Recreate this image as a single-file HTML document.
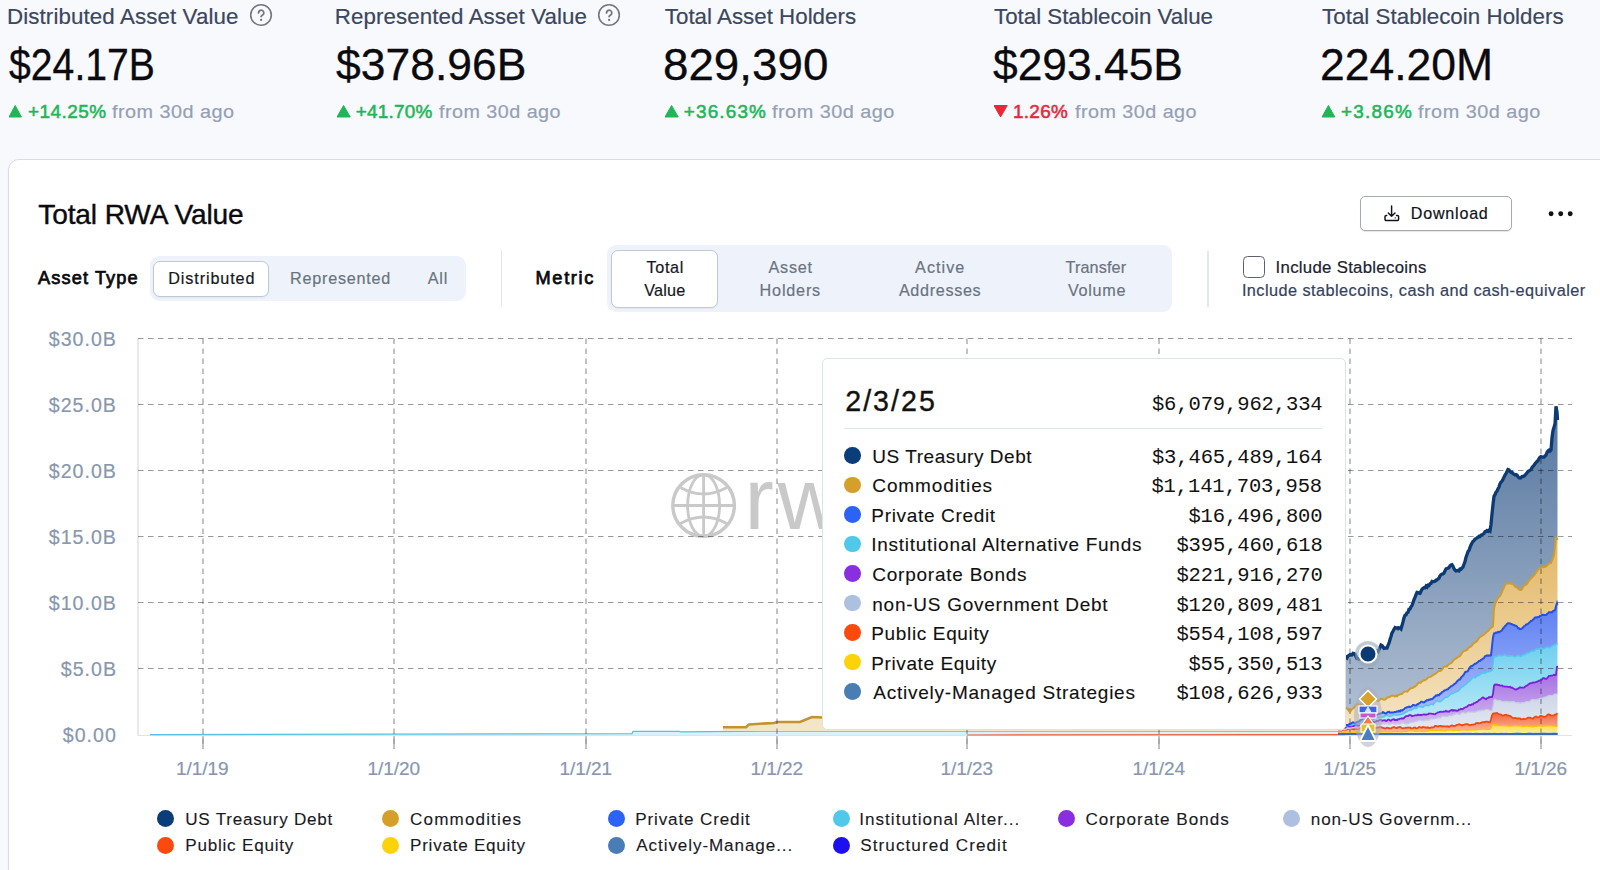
<!DOCTYPE html>
<html><head><meta charset="utf-8">
<style>
*{margin:0;padding:0;box-sizing:border-box}
html,body{width:1600px;height:870px;overflow:hidden;background:#f8f9fd;font-family:"Liberation Sans",sans-serif}
.bx,.abs{position:absolute}
.tx{position:absolute;white-space:nowrap;line-height:1}
</style></head><body>
<div class="bx" style="left:8px;top:158.5px;width:1692.00px;height:841.50px;background:#fff;border:1.5px solid #d8dce4;border-radius:11px;box-shadow:0 1px 2px rgba(20,30,50,.05)"></div><svg class="bx" style="left:249px;top:3.3px" width="24" height="24" viewBox="0 0 24 24"><circle cx="12" cy="12" r="10.3" fill="none" stroke="#74777f" stroke-width="1.6"/><path d="M9.5 9.9a2.65 2.65 0 1 1 4.1 2.2c-.9.55-1.5.85-1.5 1.5" fill="none" stroke="#74777f" stroke-width="1.8" stroke-linecap="round"/><circle cx="12.1" cy="16.9" r="1.15" fill="#74777f"/></svg><svg class="bx" style="left:596.6px;top:3.3px" width="24" height="24" viewBox="0 0 24 24"><circle cx="12" cy="12" r="10.3" fill="none" stroke="#74777f" stroke-width="1.6"/><path d="M9.5 9.9a2.65 2.65 0 1 1 4.1 2.2c-.9.55-1.5.85-1.5 1.5" fill="none" stroke="#74777f" stroke-width="1.8" stroke-linecap="round"/><circle cx="12.1" cy="16.9" r="1.15" fill="#74777f"/></svg><svg class="bx" style="left:9px;top:105px" width="13.4" height="13"><path d="M6.20,0.5 L12.40,12 L0,12 Z" fill="#1eb757" stroke="#1eb757" stroke-width="1" stroke-linejoin="round"/></svg><svg class="bx" style="left:336.8px;top:105px" width="14.2" height="13"><path d="M6.60,0.5 L13.20,12 L0,12 Z" fill="#1eb757" stroke="#1eb757" stroke-width="1" stroke-linejoin="round"/></svg><svg class="bx" style="left:664.8px;top:105px" width="14.2" height="13"><path d="M6.60,0.5 L13.20,12 L0,12 Z" fill="#1eb757" stroke="#1eb757" stroke-width="1" stroke-linejoin="round"/></svg><svg class="bx" style="left:994px;top:105px" width="14.2" height="13"><path d="M0,0.5 L13.20,0.5 L6.60,12 Z" fill="#e8283a" stroke="#e8283a" stroke-width="1" stroke-linejoin="round"/></svg><svg class="bx" style="left:1322px;top:105px" width="13.8" height="13"><path d="M6.40,0.5 L12.80,12 L0,12 Z" fill="#1eb757" stroke="#1eb757" stroke-width="1" stroke-linejoin="round"/></svg><div class="bx" style="left:1359.75px;top:196.3px;width:152.55px;height:34.95px;background:#fff;border:1.3px solid #a4a8b0;border-radius:5px;box-shadow:0 1px 1px rgba(0,0,0,.10)"></div><svg class="bx" style="left:1383px;top:205px" width="17" height="17" viewBox="0 0 17 17"><path d="M8.6 0.9v10.3M5.3 7.9l3.3 3.4 3.4-3.4" fill="none" stroke="#111318" stroke-width="1.45" stroke-linecap="round" stroke-linejoin="round"/><path d="M3.7 10.4H3.2a1.2 1.2 0 0 0-1.2 1.2v2.7a1.2 1.2 0 0 0 1.2 1.2h11.2a1.2 1.2 0 0 0 1.2-1.2v-2.7a1.2 1.2 0 0 0-1.2-1.2h-.9" fill="none" stroke="#111318" stroke-width="1.45" stroke-linecap="round"/><circle cx="12.2" cy="12.9" r="0.6" fill="#111318"/></svg><svg class="bx" style="left:1546px;top:209px" width="30" height="10"><circle cx="5.1" cy="4.7" r="2.45" fill="#111"/><circle cx="14.75" cy="4.7" r="2.45" fill="#111"/><circle cx="24.2" cy="4.7" r="2.45" fill="#111"/></svg><div class="bx" style="left:149.5px;top:256.25px;width:316.60px;height:44.25px;background:#eef3fb;border-radius:9px"></div><div class="bx" style="left:153.1px;top:260.6px;width:115.65px;height:36.00px;background:#fff;border:1.3px solid #c2c7d1;border-radius:7px;box-shadow:0 1px 2px rgba(30,40,60,.06)"></div><div class="bx" style="left:500.6px;top:249.7px;width:1.30px;height:57.00px;background:#e3e6ec"></div><div class="bx" style="left:607px;top:245.25px;width:565.40px;height:66.50px;background:#eef3fb;border-radius:9px"></div><div class="bx" style="left:611px;top:249.8px;width:107.00px;height:57.80px;background:#fff;border:1.3px solid #c2c7d1;border-radius:7px;box-shadow:0 1px 2px rgba(30,40,60,.06)"></div><div class="bx" style="left:1207.3px;top:250.5px;width:1.30px;height:56.00px;background:#e3e6ec"></div><div class="bx" style="left:1242.75px;top:256.1px;width:21.85px;height:22.05px;background:#fff;border:1.5px solid #5d6169;border-radius:4.5px"></div><div class="bx" style="left:156.80px;top:809.90px;width:17px;height:17px;border-radius:50%;background:#0b3d7a"></div><div class="bx" style="left:382.00px;top:809.90px;width:17px;height:17px;border-radius:50%;background:#d4a02a"></div><div class="bx" style="left:607.60px;top:809.90px;width:17px;height:17px;border-radius:50%;background:#2c62f5"></div><div class="bx" style="left:832.50px;top:809.90px;width:17px;height:17px;border-radius:50%;background:#4fc8ea"></div><div class="bx" style="left:1057.80px;top:809.90px;width:17px;height:17px;border-radius:50%;background:#8a2fe0"></div><div class="bx" style="left:1283.10px;top:809.90px;width:17px;height:17px;border-radius:50%;background:#adc0df"></div><div class="bx" style="left:156.80px;top:836.80px;width:17px;height:17px;border-radius:50%;background:#fc4a0e"></div><div class="bx" style="left:382.00px;top:836.80px;width:17px;height:17px;border-radius:50%;background:#fcd20a"></div><div class="bx" style="left:607.60px;top:836.80px;width:17px;height:17px;border-radius:50%;background:#4a7db5"></div><div class="bx" style="left:832.50px;top:836.80px;width:17px;height:17px;border-radius:50%;background:#1c0ff0"></div>
<svg class="abs" style="left:0;top:0" width="1600" height="870"><defs><linearGradient id="gN" gradientUnits="userSpaceOnUse" x1="0" y1="405" x2="0" y2="735"><stop offset="0" stop-color="#54759e"/><stop offset="1" stop-color="#b6c4d6"/></linearGradient><linearGradient id="gG" gradientUnits="userSpaceOnUse" x1="0" y1="535" x2="0" y2="735"><stop offset="0" stop-color="#e2b664"/><stop offset="1" stop-color="#f6e6c6"/></linearGradient><linearGradient id="gB" gradientUnits="userSpaceOnUse" x1="0" y1="602" x2="0" y2="735"><stop offset="0" stop-color="#5a7ef2"/><stop offset="1" stop-color="#b9c7fb"/></linearGradient><linearGradient id="gC" gradientUnits="userSpaceOnUse" x1="0" y1="645" x2="0" y2="735"><stop offset="0" stop-color="#6fd0ef"/><stop offset="1" stop-color="#c9eef9"/></linearGradient><linearGradient id="gP" gradientUnits="userSpaceOnUse" x1="0" y1="666" x2="0" y2="735"><stop offset="0" stop-color="#9e66e0"/><stop offset="1" stop-color="#dcc6f3"/></linearGradient><linearGradient id="gL" gradientUnits="userSpaceOnUse" x1="0" y1="694" x2="0" y2="735"><stop offset="0" stop-color="#cdd5e7"/><stop offset="1" stop-color="#e8ecf4"/></linearGradient><linearGradient id="gR" gradientUnits="userSpaceOnUse" x1="0" y1="714" x2="0" y2="735"><stop offset="0" stop-color="#f46a44"/><stop offset="1" stop-color="#fcc6ae"/></linearGradient><linearGradient id="gY" gradientUnits="userSpaceOnUse" x1="0" y1="722" x2="0" y2="735"><stop offset="0" stop-color="#fdd632"/><stop offset="1" stop-color="#fef2a8"/></linearGradient></defs><line x1="138" y1="338" x2="138" y2="735.5" stroke="#dfe3ea" stroke-width="1.5"/><line x1="138" y1="735.5" x2="1572" y2="735.5" stroke="#dfe3ea" stroke-width="1.2"/><g fill="none" stroke="#c9c9c9" stroke-width="2.8"><circle cx="703.6" cy="505.5" r="30.8" stroke-width="3.4"/><ellipse cx="703.6" cy="505.5" rx="16" ry="30.8"/><line x1="703.6" y1="475" x2="703.6" y2="536"/><line x1="673" y1="505.5" x2="734" y2="505.5"/><path d="M680.5 487.5 Q703.6 500.5 726.7 487.5"/><path d="M680.5 523.5 Q703.6 510.5 726.7 523.5"/></g><text x="744.6" y="528.7" font-family="Liberation Sans" font-size="88" letter-spacing="3.5" fill="#c9c9c9">rwa</text><path d="M150,734.6 L632,733.6 L633,731.4 L679,731.4 L681,731.8 L776,731 L900,731 L1000,731.2 L1200,731 L1345,731 L1345,735 L150,735 Z" fill="#d8f1fa"/><path d="M150,734.6 L632,733.6 L633,731.4 L679,731.4 L681,731.8 L776,731 L900,731 L1000,731.2 L1200,731 L1345,731" fill="none" stroke="#52c2e6" stroke-width="1.3"/><path d="M967,735 L1345,734.6" fill="none" stroke="#f0603a" stroke-width="1.2"/><path d="M723,727.3 L746,727.3 L749,724.4 L774,723 L777,722 L800,722 L812,717 L822,717.5 L1000,714 L1200,712 L1345,709 L1345,731 L723,731 Z" fill="#f3e6c8"/><path d="M723,727.3 L746,727.3 L749,724.4 L774,723 L777,722 L800,722 L812,717 L822,717.5 L1000,714 L1200,712 L1345,709" fill="none" stroke="#c49330" stroke-width="2.6"/><path d="M1338.0,656.2 L1339.0,657.0 L1340.0,657.8 L1341.0,657.8 L1342.0,656.1 L1343.0,654.8 L1344.0,654.9 L1345.0,656.2 L1346.0,657.2 L1347.0,658.0 L1348.0,656.0 L1349.0,655.3 L1350.0,654.6 L1351.0,655.1 L1352.0,654.9 L1353.0,653.3 L1354.0,653.5 L1355.0,654.1 L1356.0,656.6 L1357.0,658.5 L1358.0,658.7 L1359.0,659.1 L1360.0,658.7 L1361.0,657.8 L1362.0,656.8 L1363.0,655.4 L1364.0,654.9 L1365.0,654.6 L1366.0,653.9 L1367.0,653.5 L1368.0,652.4 L1369.0,652.8 L1370.0,652.0 L1371.0,652.5 L1372.0,651.3 L1373.0,650.9 L1374.0,650.8 L1375.0,650.4 L1376.0,651.5 L1377.0,651.0 L1378.0,651.7 L1379.0,649.6 L1380.0,647.6 L1381.0,645.0 L1382.0,645.5 L1383.0,646.8 L1384.0,648.4 L1385.0,648.2 L1386.0,648.0 L1387.0,648.0 L1388.0,645.4 L1389.0,643.3 L1390.0,639.5 L1391.0,636.5 L1392.0,632.9 L1393.0,631.3 L1394.0,629.2 L1395.0,627.6 L1396.0,628.1 L1397.0,627.9 L1398.0,628.6 L1399.0,627.7 L1400.0,627.9 L1401.0,628.9 L1402.0,625.6 L1403.0,621.9 L1404.0,617.8 L1405.0,615.3 L1406.0,615.0 L1407.0,612.8 L1408.0,612.3 L1409.0,609.2 L1410.0,609.0 L1411.0,606.8 L1412.0,605.5 L1413.0,602.7 L1414.0,599.7 L1415.0,597.5 L1416.0,594.6 L1417.0,592.4 L1418.0,592.6 L1419.0,593.2 L1420.0,593.4 L1421.0,591.2 L1422.0,589.2 L1423.0,588.4 L1424.0,587.7 L1425.0,587.8 L1426.0,586.1 L1427.0,587.1 L1428.0,585.2 L1429.0,585.5 L1430.0,583.8 L1431.0,583.4 L1432.0,581.4 L1433.0,581.6 L1434.0,581.6 L1435.0,581.3 L1436.0,580.0 L1437.0,579.9 L1438.0,578.9 L1439.0,578.1 L1440.0,575.8 L1441.0,574.7 L1442.0,574.1 L1443.0,574.0 L1444.0,573.1 L1445.0,570.9 L1446.0,568.8 L1447.0,568.5 L1448.0,568.2 L1449.0,567.5 L1450.0,565.8 L1451.0,565.0 L1452.0,564.7 L1453.0,566.2 L1454.0,568.6 L1455.0,570.2 L1456.0,571.0 L1457.0,570.7 L1458.0,570.4 L1459.0,570.9 L1460.0,569.1 L1461.0,569.2 L1462.0,567.9 L1463.0,567.0 L1464.0,564.2 L1465.0,561.6 L1466.0,557.3 L1467.0,554.5 L1468.0,551.6 L1469.0,550.4 L1470.0,547.4 L1471.0,545.0 L1472.0,543.0 L1473.0,541.3 L1474.0,540.6 L1475.0,539.1 L1476.0,538.7 L1477.0,537.8 L1478.0,537.3 L1479.0,536.3 L1480.0,536.5 L1481.0,535.1 L1482.0,534.8 L1483.0,534.2 L1484.0,533.5 L1485.0,531.6 L1486.0,531.4 L1487.0,530.6 L1488.0,531.3 L1489.0,530.2 L1490.0,531.0 L1491.0,524.5 L1492.0,514.0 L1493.0,504.5 L1494.0,496.4 L1495.0,494.7 L1496.0,492.1 L1497.0,491.1 L1498.0,488.7 L1499.0,487.1 L1500.0,483.8 L1501.0,482.0 L1502.0,481.2 L1503.0,479.2 L1504.0,477.1 L1505.0,475.1 L1506.0,473.5 L1507.0,471.6 L1508.0,469.6 L1509.0,469.9 L1510.0,471.5 L1511.0,472.3 L1512.0,472.2 L1513.0,473.5 L1514.0,474.3 L1515.0,475.0 L1516.0,474.6 L1517.0,475.0 L1518.0,476.7 L1519.0,477.8 L1520.0,478.0 L1521.0,477.8 L1522.0,476.6 L1523.0,476.4 L1524.0,476.2 L1525.0,475.1 L1526.0,474.0 L1527.0,472.7 L1528.0,471.6 L1529.0,471.0 L1530.0,470.2 L1531.0,469.5 L1532.0,467.7 L1533.0,466.4 L1534.0,465.3 L1535.0,463.8 L1536.0,462.5 L1537.0,461.5 L1538.0,460.6 L1539.0,458.7 L1540.0,457.2 L1541.0,456.6 L1542.0,457.1 L1543.0,457.1 L1544.0,457.1 L1545.0,455.9 L1546.0,455.0 L1547.0,452.5 L1548.0,451.0 L1549.0,450.2 L1550.0,451.2 L1551.0,450.1 L1552.0,437.8 L1553.0,430.6 L1554.0,427.3 L1555.0,424.0 L1556.0,406.3 L1557.0,412.3 L1557.5,420.0 L1557.5,540.0 L1557.0,538.7 L1556.0,537.8 L1555.0,546.7 L1554.0,555.0 L1553.0,558.2 L1552.0,560.5 L1551.0,563.1 L1550.0,563.2 L1549.0,563.6 L1548.0,564.6 L1547.0,565.5 L1546.0,566.4 L1545.0,566.8 L1544.0,567.1 L1543.0,567.3 L1542.0,567.1 L1541.0,567.4 L1540.0,568.2 L1539.0,568.8 L1538.0,569.6 L1537.0,571.1 L1536.0,572.6 L1535.0,574.3 L1534.0,575.6 L1533.0,576.4 L1532.0,577.6 L1531.0,578.1 L1530.0,579.5 L1529.0,580.4 L1528.0,582.2 L1527.0,583.9 L1526.0,584.7 L1525.0,585.0 L1524.0,585.7 L1523.0,587.3 L1522.0,589.1 L1521.0,589.9 L1520.0,589.9 L1519.0,589.3 L1518.0,588.5 L1517.0,587.4 L1516.0,587.1 L1515.0,586.4 L1514.0,585.4 L1513.0,584.2 L1512.0,583.9 L1511.0,583.7 L1510.0,582.8 L1509.0,583.5 L1508.0,583.4 L1507.0,583.5 L1506.0,583.3 L1505.0,585.2 L1504.0,587.4 L1503.0,589.6 L1502.0,591.8 L1501.0,594.2 L1500.0,596.1 L1499.0,596.8 L1498.0,598.1 L1497.0,599.8 L1496.0,601.8 L1495.0,604.1 L1494.0,609.5 L1493.0,626.3 L1492.0,627.3 L1491.0,627.8 L1490.0,628.6 L1489.0,629.8 L1488.0,631.1 L1487.0,631.7 L1486.0,632.8 L1485.0,633.7 L1484.0,634.5 L1483.0,635.2 L1482.0,635.8 L1481.0,636.5 L1480.0,636.9 L1479.0,638.2 L1478.0,639.7 L1477.0,641.1 L1476.0,642.0 L1475.0,642.4 L1474.0,643.1 L1473.0,644.0 L1472.0,645.5 L1471.0,646.6 L1470.0,646.7 L1469.0,647.6 L1468.0,648.5 L1467.0,650.0 L1466.0,650.4 L1465.0,650.7 L1464.0,651.0 L1463.0,651.6 L1462.0,653.0 L1461.0,654.7 L1460.0,655.9 L1459.0,656.6 L1458.0,656.8 L1457.0,657.9 L1456.0,658.4 L1455.0,659.2 L1454.0,659.7 L1453.0,660.9 L1452.0,662.4 L1451.0,663.2 L1450.0,663.5 L1449.0,664.1 L1448.0,665.0 L1447.0,666.4 L1446.0,666.3 L1445.0,666.5 L1444.0,666.8 L1443.0,668.3 L1442.0,669.7 L1441.0,670.6 L1440.0,670.9 L1439.0,671.0 L1438.0,671.6 L1437.0,672.5 L1436.0,673.2 L1435.0,674.1 L1434.0,674.2 L1433.0,675.3 L1432.0,675.6 L1431.0,676.6 L1430.0,676.9 L1429.0,677.1 L1428.0,677.6 L1427.0,678.7 L1426.0,679.4 L1425.0,680.2 L1424.0,680.2 L1423.0,680.7 L1422.0,681.4 L1421.0,682.4 L1420.0,682.9 L1419.0,682.6 L1418.0,683.3 L1417.0,684.9 L1416.0,685.8 L1415.0,686.6 L1414.0,686.7 L1413.0,687.8 L1412.0,688.0 L1411.0,688.2 L1410.0,688.9 L1409.0,689.7 L1408.0,691.0 L1407.0,691.7 L1406.0,691.4 L1405.0,691.4 L1404.0,692.0 L1403.0,692.8 L1402.0,694.0 L1401.0,693.8 L1400.0,694.3 L1399.0,694.7 L1398.0,695.0 L1397.0,696.2 L1396.0,695.6 L1395.0,696.5 L1394.0,695.7 L1393.0,695.8 L1392.0,695.5 L1391.0,695.9 L1390.0,696.8 L1389.0,697.0 L1388.0,697.5 L1387.0,697.5 L1386.0,698.7 L1385.0,699.5 L1384.0,699.8 L1383.0,699.4 L1382.0,698.7 L1381.0,698.8 L1380.0,699.6 L1379.0,700.4 L1378.0,701.0 L1377.0,700.4 L1376.0,700.1 L1375.0,700.0 L1374.0,700.2 L1373.0,701.4 L1372.0,701.7 L1371.0,702.3 L1370.0,701.9 L1369.0,701.9 L1368.0,702.0 L1367.0,702.2 L1366.0,702.6 L1365.0,703.3 L1364.0,704.1 L1363.0,704.2 L1362.0,704.3 L1361.0,704.6 L1360.0,705.3 L1359.0,704.8 L1358.0,704.3 L1357.0,703.8 L1356.0,704.8 L1355.0,706.1 L1354.0,707.7 L1353.0,708.2 L1352.0,709.4 L1351.0,710.4 L1350.0,711.9 L1349.0,711.0 L1348.0,709.4 L1347.0,708.1 L1346.0,708.6 L1345.0,708.9 L1344.0,709.1 L1343.0,708.9 L1342.0,709.2 L1341.0,708.8 L1340.0,708.3 L1339.0,707.8 L1338.0,708.0 Z" fill="url(#gN)"/><path d="M1338.0,708.0 L1339.0,707.8 L1340.0,708.3 L1341.0,708.8 L1342.0,709.2 L1343.0,708.9 L1344.0,709.1 L1345.0,708.9 L1346.0,708.6 L1347.0,708.1 L1348.0,709.4 L1349.0,711.0 L1350.0,711.9 L1351.0,710.4 L1352.0,709.4 L1353.0,708.2 L1354.0,707.7 L1355.0,706.1 L1356.0,704.8 L1357.0,703.8 L1358.0,704.3 L1359.0,704.8 L1360.0,705.3 L1361.0,704.6 L1362.0,704.3 L1363.0,704.2 L1364.0,704.1 L1365.0,703.3 L1366.0,702.6 L1367.0,702.2 L1368.0,702.0 L1369.0,701.9 L1370.0,701.9 L1371.0,702.3 L1372.0,701.7 L1373.0,701.4 L1374.0,700.2 L1375.0,700.0 L1376.0,700.1 L1377.0,700.4 L1378.0,701.0 L1379.0,700.4 L1380.0,699.6 L1381.0,698.8 L1382.0,698.7 L1383.0,699.4 L1384.0,699.8 L1385.0,699.5 L1386.0,698.7 L1387.0,697.5 L1388.0,697.5 L1389.0,697.0 L1390.0,696.8 L1391.0,695.9 L1392.0,695.5 L1393.0,695.8 L1394.0,695.7 L1395.0,696.5 L1396.0,695.6 L1397.0,696.2 L1398.0,695.0 L1399.0,694.7 L1400.0,694.3 L1401.0,693.8 L1402.0,694.0 L1403.0,692.8 L1404.0,692.0 L1405.0,691.4 L1406.0,691.4 L1407.0,691.7 L1408.0,691.0 L1409.0,689.7 L1410.0,688.9 L1411.0,688.2 L1412.0,688.0 L1413.0,687.8 L1414.0,686.7 L1415.0,686.6 L1416.0,685.8 L1417.0,684.9 L1418.0,683.3 L1419.0,682.6 L1420.0,682.9 L1421.0,682.4 L1422.0,681.4 L1423.0,680.7 L1424.0,680.2 L1425.0,680.2 L1426.0,679.4 L1427.0,678.7 L1428.0,677.6 L1429.0,677.1 L1430.0,676.9 L1431.0,676.6 L1432.0,675.6 L1433.0,675.3 L1434.0,674.2 L1435.0,674.1 L1436.0,673.2 L1437.0,672.5 L1438.0,671.6 L1439.0,671.0 L1440.0,670.9 L1441.0,670.6 L1442.0,669.7 L1443.0,668.3 L1444.0,666.8 L1445.0,666.5 L1446.0,666.3 L1447.0,666.4 L1448.0,665.0 L1449.0,664.1 L1450.0,663.5 L1451.0,663.2 L1452.0,662.4 L1453.0,660.9 L1454.0,659.7 L1455.0,659.2 L1456.0,658.4 L1457.0,657.9 L1458.0,656.8 L1459.0,656.6 L1460.0,655.9 L1461.0,654.7 L1462.0,653.0 L1463.0,651.6 L1464.0,651.0 L1465.0,650.7 L1466.0,650.4 L1467.0,650.0 L1468.0,648.5 L1469.0,647.6 L1470.0,646.7 L1471.0,646.6 L1472.0,645.5 L1473.0,644.0 L1474.0,643.1 L1475.0,642.4 L1476.0,642.0 L1477.0,641.1 L1478.0,639.7 L1479.0,638.2 L1480.0,636.9 L1481.0,636.5 L1482.0,635.8 L1483.0,635.2 L1484.0,634.5 L1485.0,633.7 L1486.0,632.8 L1487.0,631.7 L1488.0,631.1 L1489.0,629.8 L1490.0,628.6 L1491.0,627.8 L1492.0,627.3 L1493.0,626.3 L1494.0,609.5 L1495.0,604.1 L1496.0,601.8 L1497.0,599.8 L1498.0,598.1 L1499.0,596.8 L1500.0,596.1 L1501.0,594.2 L1502.0,591.8 L1503.0,589.6 L1504.0,587.4 L1505.0,585.2 L1506.0,583.3 L1507.0,583.5 L1508.0,583.4 L1509.0,583.5 L1510.0,582.8 L1511.0,583.7 L1512.0,583.9 L1513.0,584.2 L1514.0,585.4 L1515.0,586.4 L1516.0,587.1 L1517.0,587.4 L1518.0,588.5 L1519.0,589.3 L1520.0,589.9 L1521.0,589.9 L1522.0,589.1 L1523.0,587.3 L1524.0,585.7 L1525.0,585.0 L1526.0,584.7 L1527.0,583.9 L1528.0,582.2 L1529.0,580.4 L1530.0,579.5 L1531.0,578.1 L1532.0,577.6 L1533.0,576.4 L1534.0,575.6 L1535.0,574.3 L1536.0,572.6 L1537.0,571.1 L1538.0,569.6 L1539.0,568.8 L1540.0,568.2 L1541.0,567.4 L1542.0,567.1 L1543.0,567.3 L1544.0,567.1 L1545.0,566.8 L1546.0,566.4 L1547.0,565.5 L1548.0,564.6 L1549.0,563.6 L1550.0,563.2 L1551.0,563.1 L1552.0,560.5 L1553.0,558.2 L1554.0,555.0 L1555.0,546.7 L1556.0,537.8 L1557.0,538.7 L1557.5,540.0 L1557.5,604.9 L1557.0,603.2 L1556.0,606.4 L1555.0,610.2 L1554.0,610.6 L1553.0,611.1 L1552.0,612.4 L1551.0,612.3 L1550.0,612.2 L1549.0,612.2 L1548.0,613.2 L1547.0,614.0 L1546.0,615.1 L1545.0,615.1 L1544.0,614.9 L1543.0,614.7 L1542.0,614.9 L1541.0,615.9 L1540.0,616.0 L1539.0,616.9 L1538.0,616.9 L1537.0,617.4 L1536.0,617.2 L1535.0,617.5 L1534.0,618.7 L1533.0,619.6 L1532.0,620.7 L1531.0,620.9 L1530.0,622.1 L1529.0,622.7 L1528.0,623.8 L1527.0,624.3 L1526.0,624.7 L1525.0,625.8 L1524.0,626.3 L1523.0,627.6 L1522.0,628.5 L1521.0,629.0 L1520.0,629.2 L1519.0,628.3 L1518.0,628.2 L1517.0,626.5 L1516.0,625.9 L1515.0,625.5 L1514.0,625.0 L1513.0,624.9 L1512.0,624.2 L1511.0,624.0 L1510.0,623.4 L1509.0,623.2 L1508.0,623.3 L1507.0,624.0 L1506.0,625.4 L1505.0,625.9 L1504.0,627.6 L1503.0,628.5 L1502.0,630.3 L1501.0,631.0 L1500.0,631.7 L1499.0,632.1 L1498.0,631.9 L1497.0,632.7 L1496.0,632.6 L1495.0,633.2 L1494.0,633.3 L1493.0,637.4 L1492.0,646.6 L1491.0,655.3 L1490.0,655.7 L1489.0,655.4 L1488.0,655.8 L1487.0,655.3 L1486.0,655.8 L1485.0,656.3 L1484.0,658.0 L1483.0,658.6 L1482.0,659.4 L1481.0,659.8 L1480.0,660.9 L1479.0,660.9 L1478.0,662.0 L1477.0,662.8 L1476.0,663.6 L1475.0,663.8 L1474.0,664.5 L1473.0,665.4 L1472.0,666.0 L1471.0,666.2 L1470.0,667.2 L1469.0,668.8 L1468.0,670.9 L1467.0,671.6 L1466.0,671.8 L1465.0,672.3 L1464.0,674.4 L1463.0,675.5 L1462.0,676.6 L1461.0,677.7 L1460.0,679.5 L1459.0,679.5 L1458.0,680.4 L1457.0,681.5 L1456.0,682.9 L1455.0,683.6 L1454.0,684.2 L1453.0,685.2 L1452.0,685.9 L1451.0,686.4 L1450.0,687.2 L1449.0,687.9 L1448.0,689.2 L1447.0,689.5 L1446.0,689.9 L1445.0,690.1 L1444.0,690.9 L1443.0,691.7 L1442.0,692.1 L1441.0,693.4 L1440.0,693.9 L1439.0,695.2 L1438.0,694.8 L1437.0,695.6 L1436.0,695.4 L1435.0,696.4 L1434.0,697.3 L1433.0,698.5 L1432.0,699.3 L1431.0,699.1 L1430.0,699.7 L1429.0,699.5 L1428.0,700.2 L1427.0,700.0 L1426.0,700.9 L1425.0,701.6 L1424.0,702.4 L1423.0,702.2 L1422.0,701.8 L1421.0,701.7 L1420.0,703.0 L1419.0,703.4 L1418.0,704.0 L1417.0,704.5 L1416.0,705.6 L1415.0,705.6 L1414.0,705.1 L1413.0,705.0 L1412.0,706.0 L1411.0,706.6 L1410.0,707.1 L1409.0,706.6 L1408.0,707.0 L1407.0,707.2 L1406.0,707.7 L1405.0,708.0 L1404.0,709.3 L1403.0,709.8 L1402.0,710.7 L1401.0,710.3 L1400.0,711.4 L1399.0,710.8 L1398.0,711.7 L1397.0,711.4 L1396.0,711.9 L1395.0,711.9 L1394.0,712.3 L1393.0,712.4 L1392.0,712.4 L1391.0,712.4 L1390.0,712.6 L1389.0,711.9 L1388.0,712.0 L1387.0,712.6 L1386.0,713.6 L1385.0,713.2 L1384.0,712.8 L1383.0,712.0 L1382.0,713.1 L1381.0,713.2 L1380.0,713.8 L1379.0,713.8 L1378.0,714.4 L1377.0,714.5 L1376.0,715.0 L1375.0,715.4 L1374.0,716.0 L1373.0,716.0 L1372.0,716.0 L1371.0,716.4 L1370.0,716.2 L1369.0,716.8 L1368.0,717.5 L1367.0,718.6 L1366.0,718.6 L1365.0,718.2 L1364.0,718.3 L1363.0,718.5 L1362.0,719.3 L1361.0,719.7 L1360.0,720.5 L1359.0,721.4 L1358.0,721.8 L1357.0,722.2 L1356.0,722.6 L1355.0,723.0 L1354.0,722.6 L1353.0,722.4 L1352.0,722.8 L1351.0,723.5 L1350.0,723.9 L1349.0,724.4 L1348.0,725.0 L1347.0,725.3 L1346.0,725.0 L1345.0,724.2 L1344.0,724.4 L1343.0,724.4 L1342.0,724.9 L1341.0,725.3 L1340.0,725.5 L1339.0,725.4 L1338.0,725.1 Z" fill="url(#gG)"/><path d="M1338.0,725.1 L1339.0,725.4 L1340.0,725.5 L1341.0,725.3 L1342.0,724.9 L1343.0,724.4 L1344.0,724.4 L1345.0,724.2 L1346.0,725.0 L1347.0,725.3 L1348.0,725.0 L1349.0,724.4 L1350.0,723.9 L1351.0,723.5 L1352.0,722.8 L1353.0,722.4 L1354.0,722.6 L1355.0,723.0 L1356.0,722.6 L1357.0,722.2 L1358.0,721.8 L1359.0,721.4 L1360.0,720.5 L1361.0,719.7 L1362.0,719.3 L1363.0,718.5 L1364.0,718.3 L1365.0,718.2 L1366.0,718.6 L1367.0,718.6 L1368.0,717.5 L1369.0,716.8 L1370.0,716.2 L1371.0,716.4 L1372.0,716.0 L1373.0,716.0 L1374.0,716.0 L1375.0,715.4 L1376.0,715.0 L1377.0,714.5 L1378.0,714.4 L1379.0,713.8 L1380.0,713.8 L1381.0,713.2 L1382.0,713.1 L1383.0,712.0 L1384.0,712.8 L1385.0,713.2 L1386.0,713.6 L1387.0,712.6 L1388.0,712.0 L1389.0,711.9 L1390.0,712.6 L1391.0,712.4 L1392.0,712.4 L1393.0,712.4 L1394.0,712.3 L1395.0,711.9 L1396.0,711.9 L1397.0,711.4 L1398.0,711.7 L1399.0,710.8 L1400.0,711.4 L1401.0,710.3 L1402.0,710.7 L1403.0,709.8 L1404.0,709.3 L1405.0,708.0 L1406.0,707.7 L1407.0,707.2 L1408.0,707.0 L1409.0,706.6 L1410.0,707.1 L1411.0,706.6 L1412.0,706.0 L1413.0,705.0 L1414.0,705.1 L1415.0,705.6 L1416.0,705.6 L1417.0,704.5 L1418.0,704.0 L1419.0,703.4 L1420.0,703.0 L1421.0,701.7 L1422.0,701.8 L1423.0,702.2 L1424.0,702.4 L1425.0,701.6 L1426.0,700.9 L1427.0,700.0 L1428.0,700.2 L1429.0,699.5 L1430.0,699.7 L1431.0,699.1 L1432.0,699.3 L1433.0,698.5 L1434.0,697.3 L1435.0,696.4 L1436.0,695.4 L1437.0,695.6 L1438.0,694.8 L1439.0,695.2 L1440.0,693.9 L1441.0,693.4 L1442.0,692.1 L1443.0,691.7 L1444.0,690.9 L1445.0,690.1 L1446.0,689.9 L1447.0,689.5 L1448.0,689.2 L1449.0,687.9 L1450.0,687.2 L1451.0,686.4 L1452.0,685.9 L1453.0,685.2 L1454.0,684.2 L1455.0,683.6 L1456.0,682.9 L1457.0,681.5 L1458.0,680.4 L1459.0,679.5 L1460.0,679.5 L1461.0,677.7 L1462.0,676.6 L1463.0,675.5 L1464.0,674.4 L1465.0,672.3 L1466.0,671.8 L1467.0,671.6 L1468.0,670.9 L1469.0,668.8 L1470.0,667.2 L1471.0,666.2 L1472.0,666.0 L1473.0,665.4 L1474.0,664.5 L1475.0,663.8 L1476.0,663.6 L1477.0,662.8 L1478.0,662.0 L1479.0,660.9 L1480.0,660.9 L1481.0,659.8 L1482.0,659.4 L1483.0,658.6 L1484.0,658.0 L1485.0,656.3 L1486.0,655.8 L1487.0,655.3 L1488.0,655.8 L1489.0,655.4 L1490.0,655.7 L1491.0,655.3 L1492.0,646.6 L1493.0,637.4 L1494.0,633.3 L1495.0,633.2 L1496.0,632.6 L1497.0,632.7 L1498.0,631.9 L1499.0,632.1 L1500.0,631.7 L1501.0,631.0 L1502.0,630.3 L1503.0,628.5 L1504.0,627.6 L1505.0,625.9 L1506.0,625.4 L1507.0,624.0 L1508.0,623.3 L1509.0,623.2 L1510.0,623.4 L1511.0,624.0 L1512.0,624.2 L1513.0,624.9 L1514.0,625.0 L1515.0,625.5 L1516.0,625.9 L1517.0,626.5 L1518.0,628.2 L1519.0,628.3 L1520.0,629.2 L1521.0,629.0 L1522.0,628.5 L1523.0,627.6 L1524.0,626.3 L1525.0,625.8 L1526.0,624.7 L1527.0,624.3 L1528.0,623.8 L1529.0,622.7 L1530.0,622.1 L1531.0,620.9 L1532.0,620.7 L1533.0,619.6 L1534.0,618.7 L1535.0,617.5 L1536.0,617.2 L1537.0,617.4 L1538.0,616.9 L1539.0,616.9 L1540.0,616.0 L1541.0,615.9 L1542.0,614.9 L1543.0,614.7 L1544.0,614.9 L1545.0,615.1 L1546.0,615.1 L1547.0,614.0 L1548.0,613.2 L1549.0,612.2 L1550.0,612.2 L1551.0,612.3 L1552.0,612.4 L1553.0,611.1 L1554.0,610.6 L1555.0,610.2 L1556.0,606.4 L1557.0,603.2 L1557.5,604.9 L1557.5,643.9 L1557.0,644.1 L1556.0,644.1 L1555.0,644.7 L1554.0,644.9 L1553.0,645.5 L1552.0,645.9 L1551.0,646.8 L1550.0,647.6 L1549.0,647.5 L1548.0,647.1 L1547.0,647.3 L1546.0,647.3 L1545.0,648.2 L1544.0,648.5 L1543.0,648.8 L1542.0,648.6 L1541.0,648.0 L1540.0,648.7 L1539.0,648.9 L1538.0,649.3 L1537.0,649.1 L1536.0,649.2 L1535.0,650.1 L1534.0,651.0 L1533.0,651.4 L1532.0,651.1 L1531.0,651.0 L1530.0,652.0 L1529.0,652.7 L1528.0,653.0 L1527.0,653.1 L1526.0,653.8 L1525.0,654.6 L1524.0,654.5 L1523.0,654.9 L1522.0,655.6 L1521.0,656.7 L1520.0,656.2 L1519.0,655.8 L1518.0,655.2 L1517.0,655.7 L1516.0,656.2 L1515.0,656.6 L1514.0,656.4 L1513.0,656.1 L1512.0,655.5 L1511.0,655.8 L1510.0,655.7 L1509.0,656.0 L1508.0,656.0 L1507.0,655.8 L1506.0,655.5 L1505.0,654.5 L1504.0,655.2 L1503.0,655.0 L1502.0,655.9 L1501.0,655.4 L1500.0,655.7 L1499.0,655.3 L1498.0,655.6 L1497.0,656.2 L1496.0,656.7 L1495.0,657.0 L1494.0,656.4 L1493.0,663.7 L1492.0,670.3 L1491.0,671.0 L1490.0,671.3 L1489.0,671.6 L1488.0,671.6 L1487.0,672.1 L1486.0,672.3 L1485.0,673.1 L1484.0,672.7 L1483.0,673.2 L1482.0,673.0 L1481.0,674.1 L1480.0,674.6 L1479.0,675.5 L1478.0,675.2 L1477.0,676.2 L1476.0,677.1 L1475.0,677.8 L1474.0,677.3 L1473.0,677.3 L1472.0,678.5 L1471.0,679.4 L1470.0,681.0 L1469.0,681.1 L1468.0,682.5 L1467.0,683.1 L1466.0,684.1 L1465.0,685.2 L1464.0,685.7 L1463.0,686.6 L1462.0,686.7 L1461.0,687.7 L1460.0,689.0 L1459.0,690.2 L1458.0,691.2 L1457.0,691.3 L1456.0,691.8 L1455.0,692.2 L1454.0,692.9 L1453.0,693.4 L1452.0,693.3 L1451.0,694.1 L1450.0,694.9 L1449.0,695.7 L1448.0,696.8 L1447.0,697.0 L1446.0,697.4 L1445.0,697.3 L1444.0,698.4 L1443.0,699.6 L1442.0,700.5 L1441.0,701.2 L1440.0,701.7 L1439.0,701.5 L1438.0,701.2 L1437.0,700.9 L1436.0,701.3 L1435.0,702.5 L1434.0,703.6 L1433.0,704.7 L1432.0,704.0 L1431.0,704.3 L1430.0,704.6 L1429.0,705.7 L1428.0,705.4 L1427.0,705.5 L1426.0,705.0 L1425.0,705.7 L1424.0,706.1 L1423.0,707.0 L1422.0,707.3 L1421.0,706.9 L1420.0,706.5 L1419.0,706.3 L1418.0,706.9 L1417.0,708.1 L1416.0,708.4 L1415.0,708.4 L1414.0,707.9 L1413.0,709.1 L1412.0,709.5 L1411.0,710.3 L1410.0,709.9 L1409.0,710.5 L1408.0,710.8 L1407.0,711.7 L1406.0,712.2 L1405.0,712.8 L1404.0,713.1 L1403.0,713.9 L1402.0,713.9 L1401.0,714.5 L1400.0,714.7 L1399.0,715.0 L1398.0,714.8 L1397.0,715.2 L1396.0,714.9 L1395.0,714.7 L1394.0,714.8 L1393.0,715.1 L1392.0,715.7 L1391.0,715.9 L1390.0,716.5 L1389.0,716.1 L1388.0,715.5 L1387.0,714.9 L1386.0,715.7 L1385.0,715.8 L1384.0,717.0 L1383.0,716.9 L1382.0,717.1 L1381.0,716.8 L1380.0,717.1 L1379.0,717.5 L1378.0,717.8 L1377.0,717.6 L1376.0,718.1 L1375.0,718.7 L1374.0,719.4 L1373.0,719.8 L1372.0,719.5 L1371.0,719.1 L1370.0,718.8 L1369.0,718.8 L1368.0,719.3 L1367.0,719.8 L1366.0,720.7 L1365.0,721.3 L1364.0,721.8 L1363.0,722.2 L1362.0,722.0 L1361.0,722.3 L1360.0,722.5 L1359.0,723.7 L1358.0,723.2 L1357.0,723.0 L1356.0,722.6 L1355.0,723.1 L1354.0,723.9 L1353.0,724.5 L1352.0,725.1 L1351.0,725.2 L1350.0,725.0 L1349.0,724.9 L1348.0,725.5 L1347.0,726.1 L1346.0,726.1 L1345.0,726.1 L1344.0,725.6 L1343.0,726.0 L1342.0,725.7 L1341.0,726.3 L1340.0,726.2 L1339.0,726.9 L1338.0,727.4 Z" fill="url(#gB)"/><path d="M1338.0,727.4 L1339.0,726.9 L1340.0,726.2 L1341.0,726.3 L1342.0,725.7 L1343.0,726.0 L1344.0,725.6 L1345.0,726.1 L1346.0,726.1 L1347.0,726.1 L1348.0,725.5 L1349.0,724.9 L1350.0,725.0 L1351.0,725.2 L1352.0,725.1 L1353.0,724.5 L1354.0,723.9 L1355.0,723.1 L1356.0,722.6 L1357.0,723.0 L1358.0,723.2 L1359.0,723.7 L1360.0,722.5 L1361.0,722.3 L1362.0,722.0 L1363.0,722.2 L1364.0,721.8 L1365.0,721.3 L1366.0,720.7 L1367.0,719.8 L1368.0,719.3 L1369.0,718.8 L1370.0,718.8 L1371.0,719.1 L1372.0,719.5 L1373.0,719.8 L1374.0,719.4 L1375.0,718.7 L1376.0,718.1 L1377.0,717.6 L1378.0,717.8 L1379.0,717.5 L1380.0,717.1 L1381.0,716.8 L1382.0,717.1 L1383.0,716.9 L1384.0,717.0 L1385.0,715.8 L1386.0,715.7 L1387.0,714.9 L1388.0,715.5 L1389.0,716.1 L1390.0,716.5 L1391.0,715.9 L1392.0,715.7 L1393.0,715.1 L1394.0,714.8 L1395.0,714.7 L1396.0,714.9 L1397.0,715.2 L1398.0,714.8 L1399.0,715.0 L1400.0,714.7 L1401.0,714.5 L1402.0,713.9 L1403.0,713.9 L1404.0,713.1 L1405.0,712.8 L1406.0,712.2 L1407.0,711.7 L1408.0,710.8 L1409.0,710.5 L1410.0,709.9 L1411.0,710.3 L1412.0,709.5 L1413.0,709.1 L1414.0,707.9 L1415.0,708.4 L1416.0,708.4 L1417.0,708.1 L1418.0,706.9 L1419.0,706.3 L1420.0,706.5 L1421.0,706.9 L1422.0,707.3 L1423.0,707.0 L1424.0,706.1 L1425.0,705.7 L1426.0,705.0 L1427.0,705.5 L1428.0,705.4 L1429.0,705.7 L1430.0,704.6 L1431.0,704.3 L1432.0,704.0 L1433.0,704.7 L1434.0,703.6 L1435.0,702.5 L1436.0,701.3 L1437.0,700.9 L1438.0,701.2 L1439.0,701.5 L1440.0,701.7 L1441.0,701.2 L1442.0,700.5 L1443.0,699.6 L1444.0,698.4 L1445.0,697.3 L1446.0,697.4 L1447.0,697.0 L1448.0,696.8 L1449.0,695.7 L1450.0,694.9 L1451.0,694.1 L1452.0,693.3 L1453.0,693.4 L1454.0,692.9 L1455.0,692.2 L1456.0,691.8 L1457.0,691.3 L1458.0,691.2 L1459.0,690.2 L1460.0,689.0 L1461.0,687.7 L1462.0,686.7 L1463.0,686.6 L1464.0,685.7 L1465.0,685.2 L1466.0,684.1 L1467.0,683.1 L1468.0,682.5 L1469.0,681.1 L1470.0,681.0 L1471.0,679.4 L1472.0,678.5 L1473.0,677.3 L1474.0,677.3 L1475.0,677.8 L1476.0,677.1 L1477.0,676.2 L1478.0,675.2 L1479.0,675.5 L1480.0,674.6 L1481.0,674.1 L1482.0,673.0 L1483.0,673.2 L1484.0,672.7 L1485.0,673.1 L1486.0,672.3 L1487.0,672.1 L1488.0,671.6 L1489.0,671.6 L1490.0,671.3 L1491.0,671.0 L1492.0,670.3 L1493.0,663.7 L1494.0,656.4 L1495.0,657.0 L1496.0,656.7 L1497.0,656.2 L1498.0,655.6 L1499.0,655.3 L1500.0,655.7 L1501.0,655.4 L1502.0,655.9 L1503.0,655.0 L1504.0,655.2 L1505.0,654.5 L1506.0,655.5 L1507.0,655.8 L1508.0,656.0 L1509.0,656.0 L1510.0,655.7 L1511.0,655.8 L1512.0,655.5 L1513.0,656.1 L1514.0,656.4 L1515.0,656.6 L1516.0,656.2 L1517.0,655.7 L1518.0,655.2 L1519.0,655.8 L1520.0,656.2 L1521.0,656.7 L1522.0,655.6 L1523.0,654.9 L1524.0,654.5 L1525.0,654.6 L1526.0,653.8 L1527.0,653.1 L1528.0,653.0 L1529.0,652.7 L1530.0,652.0 L1531.0,651.0 L1532.0,651.1 L1533.0,651.4 L1534.0,651.0 L1535.0,650.1 L1536.0,649.2 L1537.0,649.1 L1538.0,649.3 L1539.0,648.9 L1540.0,648.7 L1541.0,648.0 L1542.0,648.6 L1543.0,648.8 L1544.0,648.5 L1545.0,648.2 L1546.0,647.3 L1547.0,647.3 L1548.0,647.1 L1549.0,647.5 L1550.0,647.6 L1551.0,646.8 L1552.0,645.9 L1553.0,645.5 L1554.0,644.9 L1555.0,644.7 L1556.0,644.1 L1557.0,644.1 L1557.5,643.9 L1557.5,667.7 L1557.0,666.1 L1556.0,674.7 L1555.0,675.0 L1554.0,674.8 L1553.0,675.3 L1552.0,675.7 L1551.0,675.7 L1550.0,675.8 L1549.0,675.9 L1548.0,677.2 L1547.0,678.4 L1546.0,679.0 L1545.0,678.6 L1544.0,678.2 L1543.0,678.2 L1542.0,679.6 L1541.0,679.9 L1540.0,680.6 L1539.0,680.7 L1538.0,681.2 L1537.0,681.7 L1536.0,682.1 L1535.0,682.5 L1534.0,682.7 L1533.0,682.5 L1532.0,683.1 L1531.0,683.1 L1530.0,683.4 L1529.0,684.1 L1528.0,684.8 L1527.0,685.4 L1526.0,686.1 L1525.0,686.8 L1524.0,687.6 L1523.0,687.7 L1522.0,687.6 L1521.0,687.6 L1520.0,687.3 L1519.0,687.9 L1518.0,688.6 L1517.0,689.1 L1516.0,689.6 L1515.0,689.4 L1514.0,688.8 L1513.0,688.3 L1512.0,687.4 L1511.0,687.7 L1510.0,686.7 L1509.0,687.0 L1508.0,686.8 L1507.0,686.7 L1506.0,686.7 L1505.0,686.7 L1504.0,686.3 L1503.0,686.4 L1502.0,685.4 L1501.0,685.6 L1500.0,685.6 L1499.0,685.0 L1498.0,685.1 L1497.0,684.4 L1496.0,684.7 L1495.0,684.5 L1494.0,685.7 L1493.0,694.1 L1492.0,697.1 L1491.0,697.0 L1490.0,697.4 L1489.0,697.1 L1488.0,698.2 L1487.0,698.2 L1486.0,699.3 L1485.0,698.6 L1484.0,698.2 L1483.0,697.3 L1482.0,698.0 L1481.0,698.9 L1480.0,699.7 L1479.0,700.1 L1478.0,701.1 L1477.0,701.9 L1476.0,702.4 L1475.0,702.8 L1474.0,703.0 L1473.0,704.4 L1472.0,704.2 L1471.0,705.1 L1470.0,704.9 L1469.0,705.2 L1468.0,705.8 L1467.0,706.7 L1466.0,707.2 L1465.0,707.5 L1464.0,708.1 L1463.0,708.9 L1462.0,709.3 L1461.0,708.8 L1460.0,709.6 L1459.0,709.5 L1458.0,710.6 L1457.0,710.9 L1456.0,710.4 L1455.0,710.5 L1454.0,710.1 L1453.0,710.8 L1452.0,709.9 L1451.0,710.3 L1450.0,710.8 L1449.0,711.8 L1448.0,711.5 L1447.0,711.5 L1446.0,710.9 L1445.0,711.6 L1444.0,711.5 L1443.0,711.8 L1442.0,711.9 L1441.0,711.7 L1440.0,711.9 L1439.0,712.2 L1438.0,712.4 L1437.0,713.0 L1436.0,713.5 L1435.0,714.3 L1434.0,714.1 L1433.0,713.8 L1432.0,713.8 L1431.0,713.6 L1430.0,713.6 L1429.0,713.5 L1428.0,714.4 L1427.0,714.4 L1426.0,714.7 L1425.0,714.5 L1424.0,714.4 L1423.0,714.6 L1422.0,714.8 L1421.0,715.3 L1420.0,714.7 L1419.0,715.2 L1418.0,714.6 L1417.0,715.4 L1416.0,715.2 L1415.0,715.3 L1414.0,715.6 L1413.0,715.8 L1412.0,716.2 L1411.0,715.3 L1410.0,715.0 L1409.0,715.4 L1408.0,716.1 L1407.0,716.2 L1406.0,716.2 L1405.0,717.0 L1404.0,718.1 L1403.0,718.7 L1402.0,718.3 L1401.0,718.6 L1400.0,718.6 L1399.0,719.4 L1398.0,719.3 L1397.0,720.2 L1396.0,719.8 L1395.0,720.2 L1394.0,719.3 L1393.0,719.5 L1392.0,719.7 L1391.0,720.8 L1390.0,720.4 L1389.0,719.6 L1388.0,719.7 L1387.0,720.6 L1386.0,721.0 L1385.0,720.1 L1384.0,720.3 L1383.0,720.4 L1382.0,720.7 L1381.0,719.9 L1380.0,719.9 L1379.0,720.2 L1378.0,721.0 L1377.0,720.7 L1376.0,721.5 L1375.0,721.7 L1374.0,722.5 L1373.0,721.6 L1372.0,721.2 L1371.0,721.3 L1370.0,722.5 L1369.0,723.0 L1368.0,723.6 L1367.0,723.3 L1366.0,724.1 L1365.0,723.3 L1364.0,723.2 L1363.0,723.2 L1362.0,723.7 L1361.0,724.0 L1360.0,724.5 L1359.0,725.5 L1358.0,725.8 L1357.0,725.2 L1356.0,725.1 L1355.0,725.1 L1354.0,726.0 L1353.0,725.9 L1352.0,726.1 L1351.0,725.6 L1350.0,726.3 L1349.0,726.3 L1348.0,726.2 L1347.0,726.3 L1346.0,727.0 L1345.0,727.5 L1344.0,727.1 L1343.0,726.8 L1342.0,727.2 L1341.0,728.2 L1340.0,728.6 L1339.0,728.6 L1338.0,728.2 Z" fill="url(#gC)"/><path d="M1338.0,728.2 L1339.0,728.6 L1340.0,728.6 L1341.0,728.2 L1342.0,727.2 L1343.0,726.8 L1344.0,727.1 L1345.0,727.5 L1346.0,727.0 L1347.0,726.3 L1348.0,726.2 L1349.0,726.3 L1350.0,726.3 L1351.0,725.6 L1352.0,726.1 L1353.0,725.9 L1354.0,726.0 L1355.0,725.1 L1356.0,725.1 L1357.0,725.2 L1358.0,725.8 L1359.0,725.5 L1360.0,724.5 L1361.0,724.0 L1362.0,723.7 L1363.0,723.2 L1364.0,723.2 L1365.0,723.3 L1366.0,724.1 L1367.0,723.3 L1368.0,723.6 L1369.0,723.0 L1370.0,722.5 L1371.0,721.3 L1372.0,721.2 L1373.0,721.6 L1374.0,722.5 L1375.0,721.7 L1376.0,721.5 L1377.0,720.7 L1378.0,721.0 L1379.0,720.2 L1380.0,719.9 L1381.0,719.9 L1382.0,720.7 L1383.0,720.4 L1384.0,720.3 L1385.0,720.1 L1386.0,721.0 L1387.0,720.6 L1388.0,719.7 L1389.0,719.6 L1390.0,720.4 L1391.0,720.8 L1392.0,719.7 L1393.0,719.5 L1394.0,719.3 L1395.0,720.2 L1396.0,719.8 L1397.0,720.2 L1398.0,719.3 L1399.0,719.4 L1400.0,718.6 L1401.0,718.6 L1402.0,718.3 L1403.0,718.7 L1404.0,718.1 L1405.0,717.0 L1406.0,716.2 L1407.0,716.2 L1408.0,716.1 L1409.0,715.4 L1410.0,715.0 L1411.0,715.3 L1412.0,716.2 L1413.0,715.8 L1414.0,715.6 L1415.0,715.3 L1416.0,715.2 L1417.0,715.4 L1418.0,714.6 L1419.0,715.2 L1420.0,714.7 L1421.0,715.3 L1422.0,714.8 L1423.0,714.6 L1424.0,714.4 L1425.0,714.5 L1426.0,714.7 L1427.0,714.4 L1428.0,714.4 L1429.0,713.5 L1430.0,713.6 L1431.0,713.6 L1432.0,713.8 L1433.0,713.8 L1434.0,714.1 L1435.0,714.3 L1436.0,713.5 L1437.0,713.0 L1438.0,712.4 L1439.0,712.2 L1440.0,711.9 L1441.0,711.7 L1442.0,711.9 L1443.0,711.8 L1444.0,711.5 L1445.0,711.6 L1446.0,710.9 L1447.0,711.5 L1448.0,711.5 L1449.0,711.8 L1450.0,710.8 L1451.0,710.3 L1452.0,709.9 L1453.0,710.8 L1454.0,710.1 L1455.0,710.5 L1456.0,710.4 L1457.0,710.9 L1458.0,710.6 L1459.0,709.5 L1460.0,709.6 L1461.0,708.8 L1462.0,709.3 L1463.0,708.9 L1464.0,708.1 L1465.0,707.5 L1466.0,707.2 L1467.0,706.7 L1468.0,705.8 L1469.0,705.2 L1470.0,704.9 L1471.0,705.1 L1472.0,704.2 L1473.0,704.4 L1474.0,703.0 L1475.0,702.8 L1476.0,702.4 L1477.0,701.9 L1478.0,701.1 L1479.0,700.1 L1480.0,699.7 L1481.0,698.9 L1482.0,698.0 L1483.0,697.3 L1484.0,698.2 L1485.0,698.6 L1486.0,699.3 L1487.0,698.2 L1488.0,698.2 L1489.0,697.1 L1490.0,697.4 L1491.0,697.0 L1492.0,697.1 L1493.0,694.1 L1494.0,685.7 L1495.0,684.5 L1496.0,684.7 L1497.0,684.4 L1498.0,685.1 L1499.0,685.0 L1500.0,685.6 L1501.0,685.6 L1502.0,685.4 L1503.0,686.4 L1504.0,686.3 L1505.0,686.7 L1506.0,686.7 L1507.0,686.7 L1508.0,686.8 L1509.0,687.0 L1510.0,686.7 L1511.0,687.7 L1512.0,687.4 L1513.0,688.3 L1514.0,688.8 L1515.0,689.4 L1516.0,689.6 L1517.0,689.1 L1518.0,688.6 L1519.0,687.9 L1520.0,687.3 L1521.0,687.6 L1522.0,687.6 L1523.0,687.7 L1524.0,687.6 L1525.0,686.8 L1526.0,686.1 L1527.0,685.4 L1528.0,684.8 L1529.0,684.1 L1530.0,683.4 L1531.0,683.1 L1532.0,683.1 L1533.0,682.5 L1534.0,682.7 L1535.0,682.5 L1536.0,682.1 L1537.0,681.7 L1538.0,681.2 L1539.0,680.7 L1540.0,680.6 L1541.0,679.9 L1542.0,679.6 L1543.0,678.2 L1544.0,678.2 L1545.0,678.6 L1546.0,679.0 L1547.0,678.4 L1548.0,677.2 L1549.0,675.9 L1550.0,675.8 L1551.0,675.7 L1552.0,675.7 L1553.0,675.3 L1554.0,674.8 L1555.0,675.0 L1556.0,674.7 L1557.0,666.1 L1557.5,667.7 L1557.5,693.7 L1557.0,694.0 L1556.0,694.2 L1555.0,694.1 L1554.0,694.6 L1553.0,695.3 L1552.0,695.6 L1551.0,695.5 L1550.0,695.4 L1549.0,695.7 L1548.0,695.9 L1547.0,696.5 L1546.0,696.9 L1545.0,697.1 L1544.0,697.6 L1543.0,697.9 L1542.0,698.3 L1541.0,698.2 L1540.0,698.5 L1539.0,698.8 L1538.0,699.4 L1537.0,699.4 L1536.0,700.1 L1535.0,699.8 L1534.0,699.7 L1533.0,699.4 L1532.0,699.5 L1531.0,700.4 L1530.0,701.0 L1529.0,701.8 L1528.0,701.7 L1527.0,701.4 L1526.0,701.8 L1525.0,702.2 L1524.0,702.9 L1523.0,702.6 L1522.0,702.7 L1521.0,703.1 L1520.0,703.2 L1519.0,703.0 L1518.0,702.6 L1517.0,702.8 L1516.0,702.6 L1515.0,702.2 L1514.0,701.7 L1513.0,701.6 L1512.0,701.8 L1511.0,701.8 L1510.0,702.0 L1509.0,701.6 L1508.0,701.8 L1507.0,701.4 L1506.0,701.5 L1505.0,701.4 L1504.0,701.8 L1503.0,701.7 L1502.0,701.4 L1501.0,701.1 L1500.0,700.6 L1499.0,700.3 L1498.0,700.4 L1497.0,700.4 L1496.0,700.0 L1495.0,699.3 L1494.0,700.2 L1493.0,707.0 L1492.0,710.0 L1491.0,710.7 L1490.0,710.3 L1489.0,710.2 L1488.0,709.6 L1487.0,709.5 L1486.0,709.4 L1485.0,710.0 L1484.0,710.3 L1483.0,710.2 L1482.0,710.4 L1481.0,710.6 L1480.0,710.9 L1479.0,710.7 L1478.0,711.0 L1477.0,711.4 L1476.0,711.9 L1475.0,712.1 L1474.0,712.3 L1473.0,711.9 L1472.0,712.1 L1471.0,712.0 L1470.0,712.3 L1469.0,711.9 L1468.0,712.0 L1467.0,712.5 L1466.0,713.1 L1465.0,713.3 L1464.0,712.9 L1463.0,712.4 L1462.0,713.0 L1461.0,713.5 L1460.0,714.3 L1459.0,714.4 L1458.0,714.1 L1457.0,713.8 L1456.0,713.7 L1455.0,714.5 L1454.0,714.6 L1453.0,715.1 L1452.0,715.5 L1451.0,715.7 L1450.0,715.7 L1449.0,715.8 L1448.0,716.4 L1447.0,716.5 L1446.0,716.7 L1445.0,716.4 L1444.0,716.5 L1443.0,716.0 L1442.0,716.7 L1441.0,717.5 L1440.0,718.0 L1439.0,717.6 L1438.0,717.9 L1437.0,718.1 L1436.0,718.4 L1435.0,718.6 L1434.0,718.8 L1433.0,719.2 L1432.0,718.8 L1431.0,719.0 L1430.0,719.4 L1429.0,720.1 L1428.0,720.2 L1427.0,719.9 L1426.0,720.1 L1425.0,720.1 L1424.0,720.8 L1423.0,720.5 L1422.0,720.8 L1421.0,720.2 L1420.0,720.2 L1419.0,720.4 L1418.0,720.8 L1417.0,721.2 L1416.0,721.6 L1415.0,721.4 L1414.0,721.9 L1413.0,722.2 L1412.0,722.5 L1411.0,722.3 L1410.0,722.5 L1409.0,723.2 L1408.0,723.7 L1407.0,723.8 L1406.0,723.9 L1405.0,723.8 L1404.0,723.3 L1403.0,722.8 L1402.0,722.8 L1401.0,723.6 L1400.0,723.9 L1399.0,724.1 L1398.0,723.4 L1397.0,724.0 L1396.0,724.2 L1395.0,724.3 L1394.0,723.8 L1393.0,723.4 L1392.0,723.5 L1391.0,724.0 L1390.0,724.1 L1389.0,724.3 L1388.0,723.7 L1387.0,723.7 L1386.0,723.7 L1385.0,723.7 L1384.0,724.3 L1383.0,723.8 L1382.0,724.0 L1381.0,723.8 L1380.0,724.2 L1379.0,724.1 L1378.0,724.2 L1377.0,724.1 L1376.0,724.4 L1375.0,724.1 L1374.0,724.1 L1373.0,724.7 L1372.0,725.3 L1371.0,725.5 L1370.0,725.3 L1369.0,725.4 L1368.0,725.8 L1367.0,725.6 L1366.0,725.5 L1365.0,725.8 L1364.0,726.7 L1363.0,726.8 L1362.0,726.6 L1361.0,726.4 L1360.0,727.0 L1359.0,727.5 L1358.0,728.0 L1357.0,727.8 L1356.0,727.7 L1355.0,727.2 L1354.0,727.5 L1353.0,727.6 L1352.0,728.0 L1351.0,728.1 L1350.0,728.5 L1349.0,728.4 L1348.0,728.3 L1347.0,728.5 L1346.0,729.2 L1345.0,729.5 L1344.0,729.3 L1343.0,729.3 L1342.0,729.8 L1341.0,730.6 L1340.0,730.8 L1339.0,731.1 L1338.0,731.1 Z" fill="url(#gP)"/><path d="M1338.0,731.1 L1339.0,731.1 L1340.0,730.8 L1341.0,730.6 L1342.0,729.8 L1343.0,729.3 L1344.0,729.3 L1345.0,729.5 L1346.0,729.2 L1347.0,728.5 L1348.0,728.3 L1349.0,728.4 L1350.0,728.5 L1351.0,728.1 L1352.0,728.0 L1353.0,727.6 L1354.0,727.5 L1355.0,727.2 L1356.0,727.7 L1357.0,727.8 L1358.0,728.0 L1359.0,727.5 L1360.0,727.0 L1361.0,726.4 L1362.0,726.6 L1363.0,726.8 L1364.0,726.7 L1365.0,725.8 L1366.0,725.5 L1367.0,725.6 L1368.0,725.8 L1369.0,725.4 L1370.0,725.3 L1371.0,725.5 L1372.0,725.3 L1373.0,724.7 L1374.0,724.1 L1375.0,724.1 L1376.0,724.4 L1377.0,724.1 L1378.0,724.2 L1379.0,724.1 L1380.0,724.2 L1381.0,723.8 L1382.0,724.0 L1383.0,723.8 L1384.0,724.3 L1385.0,723.7 L1386.0,723.7 L1387.0,723.7 L1388.0,723.7 L1389.0,724.3 L1390.0,724.1 L1391.0,724.0 L1392.0,723.5 L1393.0,723.4 L1394.0,723.8 L1395.0,724.3 L1396.0,724.2 L1397.0,724.0 L1398.0,723.4 L1399.0,724.1 L1400.0,723.9 L1401.0,723.6 L1402.0,722.8 L1403.0,722.8 L1404.0,723.3 L1405.0,723.8 L1406.0,723.9 L1407.0,723.8 L1408.0,723.7 L1409.0,723.2 L1410.0,722.5 L1411.0,722.3 L1412.0,722.5 L1413.0,722.2 L1414.0,721.9 L1415.0,721.4 L1416.0,721.6 L1417.0,721.2 L1418.0,720.8 L1419.0,720.4 L1420.0,720.2 L1421.0,720.2 L1422.0,720.8 L1423.0,720.5 L1424.0,720.8 L1425.0,720.1 L1426.0,720.1 L1427.0,719.9 L1428.0,720.2 L1429.0,720.1 L1430.0,719.4 L1431.0,719.0 L1432.0,718.8 L1433.0,719.2 L1434.0,718.8 L1435.0,718.6 L1436.0,718.4 L1437.0,718.1 L1438.0,717.9 L1439.0,717.6 L1440.0,718.0 L1441.0,717.5 L1442.0,716.7 L1443.0,716.0 L1444.0,716.5 L1445.0,716.4 L1446.0,716.7 L1447.0,716.5 L1448.0,716.4 L1449.0,715.8 L1450.0,715.7 L1451.0,715.7 L1452.0,715.5 L1453.0,715.1 L1454.0,714.6 L1455.0,714.5 L1456.0,713.7 L1457.0,713.8 L1458.0,714.1 L1459.0,714.4 L1460.0,714.3 L1461.0,713.5 L1462.0,713.0 L1463.0,712.4 L1464.0,712.9 L1465.0,713.3 L1466.0,713.1 L1467.0,712.5 L1468.0,712.0 L1469.0,711.9 L1470.0,712.3 L1471.0,712.0 L1472.0,712.1 L1473.0,711.9 L1474.0,712.3 L1475.0,712.1 L1476.0,711.9 L1477.0,711.4 L1478.0,711.0 L1479.0,710.7 L1480.0,710.9 L1481.0,710.6 L1482.0,710.4 L1483.0,710.2 L1484.0,710.3 L1485.0,710.0 L1486.0,709.4 L1487.0,709.5 L1488.0,709.6 L1489.0,710.2 L1490.0,710.3 L1491.0,710.7 L1492.0,710.0 L1493.0,707.0 L1494.0,700.2 L1495.0,699.3 L1496.0,700.0 L1497.0,700.4 L1498.0,700.4 L1499.0,700.3 L1500.0,700.6 L1501.0,701.1 L1502.0,701.4 L1503.0,701.7 L1504.0,701.8 L1505.0,701.4 L1506.0,701.5 L1507.0,701.4 L1508.0,701.8 L1509.0,701.6 L1510.0,702.0 L1511.0,701.8 L1512.0,701.8 L1513.0,701.6 L1514.0,701.7 L1515.0,702.2 L1516.0,702.6 L1517.0,702.8 L1518.0,702.6 L1519.0,703.0 L1520.0,703.2 L1521.0,703.1 L1522.0,702.7 L1523.0,702.6 L1524.0,702.9 L1525.0,702.2 L1526.0,701.8 L1527.0,701.4 L1528.0,701.7 L1529.0,701.8 L1530.0,701.0 L1531.0,700.4 L1532.0,699.5 L1533.0,699.4 L1534.0,699.7 L1535.0,699.8 L1536.0,700.1 L1537.0,699.4 L1538.0,699.4 L1539.0,698.8 L1540.0,698.5 L1541.0,698.2 L1542.0,698.3 L1543.0,697.9 L1544.0,697.6 L1545.0,697.1 L1546.0,696.9 L1547.0,696.5 L1548.0,695.9 L1549.0,695.7 L1550.0,695.4 L1551.0,695.5 L1552.0,695.6 L1553.0,695.3 L1554.0,694.6 L1555.0,694.1 L1556.0,694.2 L1557.0,694.0 L1557.5,693.7 L1557.5,713.2 L1557.0,713.6 L1556.0,714.5 L1555.0,714.7 L1554.0,715.1 L1553.0,715.4 L1552.0,715.6 L1551.0,715.5 L1550.0,714.9 L1549.0,714.5 L1548.0,714.4 L1547.0,715.3 L1546.0,716.2 L1545.0,716.9 L1544.0,717.0 L1543.0,716.7 L1542.0,716.0 L1541.0,715.9 L1540.0,716.1 L1539.0,717.1 L1538.0,717.4 L1537.0,717.1 L1536.0,716.4 L1535.0,716.7 L1534.0,717.6 L1533.0,718.7 L1532.0,718.4 L1531.0,718.1 L1530.0,717.6 L1529.0,717.6 L1528.0,717.6 L1527.0,718.3 L1526.0,718.8 L1525.0,719.2 L1524.0,718.7 L1523.0,719.1 L1522.0,719.1 L1521.0,719.2 L1520.0,718.4 L1519.0,718.3 L1518.0,718.5 L1517.0,718.3 L1516.0,718.1 L1515.0,718.0 L1514.0,718.2 L1513.0,718.1 L1512.0,717.4 L1511.0,716.5 L1510.0,715.8 L1509.0,715.7 L1508.0,715.3 L1507.0,715.1 L1506.0,714.7 L1505.0,714.8 L1504.0,715.3 L1503.0,715.8 L1502.0,715.3 L1501.0,714.6 L1500.0,714.3 L1499.0,714.2 L1498.0,713.8 L1497.0,713.0 L1496.0,713.1 L1495.0,713.4 L1494.0,713.4 L1493.0,713.6 L1492.0,715.3 L1491.0,719.3 L1490.0,722.1 L1489.0,722.2 L1488.0,721.8 L1487.0,721.6 L1486.0,721.6 L1485.0,722.3 L1484.0,722.0 L1483.0,722.3 L1482.0,722.1 L1481.0,722.9 L1480.0,723.2 L1479.0,723.4 L1478.0,722.9 L1477.0,723.2 L1476.0,723.2 L1475.0,724.2 L1474.0,724.5 L1473.0,724.7 L1472.0,724.7 L1471.0,724.8 L1470.0,725.2 L1469.0,724.9 L1468.0,724.4 L1467.0,724.1 L1466.0,724.1 L1465.0,724.3 L1464.0,724.8 L1463.0,724.9 L1462.0,725.5 L1461.0,724.8 L1460.0,724.6 L1459.0,724.2 L1458.0,724.6 L1457.0,724.9 L1456.0,725.3 L1455.0,725.9 L1454.0,726.0 L1453.0,725.9 L1452.0,725.3 L1451.0,725.9 L1450.0,726.3 L1449.0,726.9 L1448.0,726.3 L1447.0,726.5 L1446.0,726.4 L1445.0,726.3 L1444.0,726.4 L1443.0,726.1 L1442.0,726.5 L1441.0,725.9 L1440.0,725.9 L1439.0,726.1 L1438.0,726.5 L1437.0,726.3 L1436.0,726.0 L1435.0,726.0 L1434.0,727.0 L1433.0,727.3 L1432.0,727.5 L1431.0,727.5 L1430.0,727.8 L1429.0,728.0 L1428.0,727.3 L1427.0,727.7 L1426.0,727.5 L1425.0,727.5 L1424.0,727.2 L1423.0,726.9 L1422.0,727.7 L1421.0,727.3 L1420.0,727.4 L1419.0,727.0 L1418.0,727.7 L1417.0,728.3 L1416.0,728.3 L1415.0,727.4 L1414.0,727.6 L1413.0,728.1 L1412.0,728.3 L1411.0,728.3 L1410.0,727.5 L1409.0,727.8 L1408.0,727.4 L1407.0,727.8 L1406.0,727.6 L1405.0,727.9 L1404.0,728.1 L1403.0,728.4 L1402.0,728.1 L1401.0,727.5 L1400.0,726.9 L1399.0,727.2 L1398.0,727.4 L1397.0,728.1 L1396.0,727.8 L1395.0,727.6 L1394.0,727.0 L1393.0,727.3 L1392.0,727.8 L1391.0,728.4 L1390.0,728.4 L1389.0,728.3 L1388.0,727.9 L1387.0,727.7 L1386.0,728.2 L1385.0,728.5 L1384.0,728.2 L1383.0,728.0 L1382.0,727.5 L1381.0,727.4 L1380.0,726.9 L1379.0,727.4 L1378.0,727.4 L1377.0,727.8 L1376.0,727.7 L1375.0,728.1 L1374.0,728.2 L1373.0,728.5 L1372.0,728.0 L1371.0,727.8 L1370.0,727.7 L1369.0,728.4 L1368.0,728.5 L1367.0,728.4 L1366.0,728.6 L1365.0,728.2 L1364.0,728.0 L1363.0,727.3 L1362.0,727.3 L1361.0,727.2 L1360.0,727.8 L1359.0,728.4 L1358.0,729.1 L1357.0,729.0 L1356.0,729.2 L1355.0,729.1 L1354.0,729.4 L1353.0,729.1 L1352.0,728.8 L1351.0,728.2 L1350.0,728.5 L1349.0,728.7 L1348.0,729.2 L1347.0,729.3 L1346.0,729.7 L1345.0,729.5 L1344.0,729.6 L1343.0,729.8 L1342.0,730.2 L1341.0,730.9 L1340.0,730.8 L1339.0,731.4 L1338.0,731.1 Z" fill="url(#gL)"/><path d="M1338.0,731.1 L1339.0,731.4 L1340.0,730.8 L1341.0,730.9 L1342.0,730.2 L1343.0,729.8 L1344.0,729.6 L1345.0,729.5 L1346.0,729.7 L1347.0,729.3 L1348.0,729.2 L1349.0,728.7 L1350.0,728.5 L1351.0,728.2 L1352.0,728.8 L1353.0,729.1 L1354.0,729.4 L1355.0,729.1 L1356.0,729.2 L1357.0,729.0 L1358.0,729.1 L1359.0,728.4 L1360.0,727.8 L1361.0,727.2 L1362.0,727.3 L1363.0,727.3 L1364.0,728.0 L1365.0,728.2 L1366.0,728.6 L1367.0,728.4 L1368.0,728.5 L1369.0,728.4 L1370.0,727.7 L1371.0,727.8 L1372.0,728.0 L1373.0,728.5 L1374.0,728.2 L1375.0,728.1 L1376.0,727.7 L1377.0,727.8 L1378.0,727.4 L1379.0,727.4 L1380.0,726.9 L1381.0,727.4 L1382.0,727.5 L1383.0,728.0 L1384.0,728.2 L1385.0,728.5 L1386.0,728.2 L1387.0,727.7 L1388.0,727.9 L1389.0,728.3 L1390.0,728.4 L1391.0,728.4 L1392.0,727.8 L1393.0,727.3 L1394.0,727.0 L1395.0,727.6 L1396.0,727.8 L1397.0,728.1 L1398.0,727.4 L1399.0,727.2 L1400.0,726.9 L1401.0,727.5 L1402.0,728.1 L1403.0,728.4 L1404.0,728.1 L1405.0,727.9 L1406.0,727.6 L1407.0,727.8 L1408.0,727.4 L1409.0,727.8 L1410.0,727.5 L1411.0,728.3 L1412.0,728.3 L1413.0,728.1 L1414.0,727.6 L1415.0,727.4 L1416.0,728.3 L1417.0,728.3 L1418.0,727.7 L1419.0,727.0 L1420.0,727.4 L1421.0,727.3 L1422.0,727.7 L1423.0,726.9 L1424.0,727.2 L1425.0,727.5 L1426.0,727.5 L1427.0,727.7 L1428.0,727.3 L1429.0,728.0 L1430.0,727.8 L1431.0,727.5 L1432.0,727.5 L1433.0,727.3 L1434.0,727.0 L1435.0,726.0 L1436.0,726.0 L1437.0,726.3 L1438.0,726.5 L1439.0,726.1 L1440.0,725.9 L1441.0,725.9 L1442.0,726.5 L1443.0,726.1 L1444.0,726.4 L1445.0,726.3 L1446.0,726.4 L1447.0,726.5 L1448.0,726.3 L1449.0,726.9 L1450.0,726.3 L1451.0,725.9 L1452.0,725.3 L1453.0,725.9 L1454.0,726.0 L1455.0,725.9 L1456.0,725.3 L1457.0,724.9 L1458.0,724.6 L1459.0,724.2 L1460.0,724.6 L1461.0,724.8 L1462.0,725.5 L1463.0,724.9 L1464.0,724.8 L1465.0,724.3 L1466.0,724.1 L1467.0,724.1 L1468.0,724.4 L1469.0,724.9 L1470.0,725.2 L1471.0,724.8 L1472.0,724.7 L1473.0,724.7 L1474.0,724.5 L1475.0,724.2 L1476.0,723.2 L1477.0,723.2 L1478.0,722.9 L1479.0,723.4 L1480.0,723.2 L1481.0,722.9 L1482.0,722.1 L1483.0,722.3 L1484.0,722.0 L1485.0,722.3 L1486.0,721.6 L1487.0,721.6 L1488.0,721.8 L1489.0,722.2 L1490.0,722.1 L1491.0,719.3 L1492.0,715.3 L1493.0,713.6 L1494.0,713.4 L1495.0,713.4 L1496.0,713.1 L1497.0,713.0 L1498.0,713.8 L1499.0,714.2 L1500.0,714.3 L1501.0,714.6 L1502.0,715.3 L1503.0,715.8 L1504.0,715.3 L1505.0,714.8 L1506.0,714.7 L1507.0,715.1 L1508.0,715.3 L1509.0,715.7 L1510.0,715.8 L1511.0,716.5 L1512.0,717.4 L1513.0,718.1 L1514.0,718.2 L1515.0,718.0 L1516.0,718.1 L1517.0,718.3 L1518.0,718.5 L1519.0,718.3 L1520.0,718.4 L1521.0,719.2 L1522.0,719.1 L1523.0,719.1 L1524.0,718.7 L1525.0,719.2 L1526.0,718.8 L1527.0,718.3 L1528.0,717.6 L1529.0,717.6 L1530.0,717.6 L1531.0,718.1 L1532.0,718.4 L1533.0,718.7 L1534.0,717.6 L1535.0,716.7 L1536.0,716.4 L1537.0,717.1 L1538.0,717.4 L1539.0,717.1 L1540.0,716.1 L1541.0,715.9 L1542.0,716.0 L1543.0,716.7 L1544.0,717.0 L1545.0,716.9 L1546.0,716.2 L1547.0,715.3 L1548.0,714.4 L1549.0,714.5 L1550.0,714.9 L1551.0,715.5 L1552.0,715.6 L1553.0,715.4 L1554.0,715.1 L1555.0,714.7 L1556.0,714.5 L1557.0,713.6 L1557.5,713.2 L1557.5,726.4 L1557.0,726.3 L1556.0,726.3 L1555.0,726.2 L1554.0,726.2 L1553.0,726.0 L1552.0,725.9 L1551.0,725.7 L1550.0,725.6 L1549.0,725.7 L1548.0,725.7 L1547.0,725.9 L1546.0,725.7 L1545.0,725.9 L1544.0,725.9 L1543.0,726.1 L1542.0,726.1 L1541.0,726.2 L1540.0,726.0 L1539.0,726.0 L1538.0,726.0 L1537.0,726.4 L1536.0,726.4 L1535.0,726.5 L1534.0,726.5 L1533.0,726.9 L1532.0,726.8 L1531.0,726.6 L1530.0,726.2 L1529.0,726.3 L1528.0,726.2 L1527.0,726.2 L1526.0,726.1 L1525.0,726.2 L1524.0,726.4 L1523.0,726.6 L1522.0,726.4 L1521.0,726.0 L1520.0,725.7 L1519.0,726.0 L1518.0,725.9 L1517.0,725.8 L1516.0,725.5 L1515.0,725.6 L1514.0,725.7 L1513.0,725.9 L1512.0,726.0 L1511.0,726.2 L1510.0,726.0 L1509.0,726.1 L1508.0,726.0 L1507.0,726.0 L1506.0,725.7 L1505.0,725.8 L1504.0,725.7 L1503.0,725.7 L1502.0,725.7 L1501.0,725.5 L1500.0,725.7 L1499.0,725.4 L1498.0,725.4 L1497.0,725.2 L1496.0,725.2 L1495.0,725.1 L1494.0,724.9 L1493.0,724.5 L1492.0,726.1 L1491.0,727.6 L1490.0,729.3 L1489.0,729.3 L1488.0,729.6 L1487.0,729.5 L1486.0,729.5 L1485.0,729.3 L1484.0,729.2 L1483.0,729.2 L1482.0,729.2 L1481.0,729.3 L1480.0,729.5 L1479.0,729.5 L1478.0,729.5 L1477.0,729.7 L1476.0,729.9 L1475.0,730.0 L1474.0,729.8 L1473.0,729.9 L1472.0,729.9 L1471.0,730.0 L1470.0,729.7 L1469.0,730.1 L1468.0,730.0 L1467.0,730.4 L1466.0,730.1 L1465.0,730.0 L1464.0,729.9 L1463.0,730.0 L1462.0,729.8 L1461.0,729.9 L1460.0,730.1 L1459.0,730.5 L1458.0,730.3 L1457.0,730.2 L1456.0,730.1 L1455.0,730.5 L1454.0,730.6 L1453.0,730.3 L1452.0,730.1 L1451.0,730.2 L1450.0,730.2 L1449.0,730.2 L1448.0,730.0 L1447.0,730.4 L1446.0,730.6 L1445.0,731.0 L1444.0,730.7 L1443.0,730.6 L1442.0,730.4 L1441.0,730.6 L1440.0,730.4 L1439.0,730.3 L1438.0,730.4 L1437.0,730.5 L1436.0,730.6 L1435.0,730.5 L1434.0,730.6 L1433.0,730.5 L1432.0,730.6 L1431.0,730.7 L1430.0,730.7 L1429.0,730.8 L1428.0,731.1 L1427.0,731.2 L1426.0,731.1 L1425.0,731.1 L1424.0,731.0 L1423.0,731.3 L1422.0,731.3 L1421.0,731.2 L1420.0,731.1 L1419.0,731.1 L1418.0,731.1 L1417.0,731.2 L1416.0,731.3 L1415.0,731.5 L1414.0,731.2 L1413.0,731.0 L1412.0,730.8 L1411.0,730.9 L1410.0,730.9 L1409.0,731.0 L1408.0,731.2 L1407.0,731.5 L1406.0,731.7 L1405.0,731.5 L1404.0,731.5 L1403.0,731.7 L1402.0,731.9 L1401.0,731.9 L1400.0,731.8 L1399.0,731.7 L1398.0,731.5 L1397.0,731.6 L1396.0,731.7 L1395.0,731.7 L1394.0,731.7 L1393.0,731.7 L1392.0,731.9 L1391.0,732.0 L1390.0,732.1 L1389.0,731.9 L1388.0,731.9 L1387.0,731.8 L1386.0,731.8 L1385.0,731.7 L1384.0,731.6 L1383.0,731.9 L1382.0,731.9 L1381.0,732.1 L1380.0,731.9 L1379.0,732.0 L1378.0,732.1 L1377.0,732.2 L1376.0,732.0 L1375.0,732.1 L1374.0,731.9 L1373.0,731.9 L1372.0,731.8 L1371.0,731.8 L1370.0,732.0 L1369.0,732.1 L1368.0,732.3 L1367.0,732.5 L1366.0,732.5 L1365.0,732.7 L1364.0,732.5 L1363.0,732.6 L1362.0,732.4 L1361.0,732.5 L1360.0,732.4 L1359.0,732.5 L1358.0,732.2 L1357.0,732.4 L1356.0,732.4 L1355.0,732.4 L1354.0,732.3 L1353.0,732.3 L1352.0,732.6 L1351.0,732.9 L1350.0,733.0 L1349.0,733.0 L1348.0,732.9 L1347.0,733.0 L1346.0,733.1 L1345.0,732.9 L1344.0,732.7 L1343.0,732.5 L1342.0,732.7 L1341.0,733.0 L1340.0,733.2 L1339.0,733.4 L1338.0,733.5 Z" fill="url(#gR)"/><path d="M1338.0,733.5 L1339.0,733.4 L1340.0,733.2 L1341.0,733.0 L1342.0,732.7 L1343.0,732.5 L1344.0,732.7 L1345.0,732.9 L1346.0,733.1 L1347.0,733.0 L1348.0,732.9 L1349.0,733.0 L1350.0,733.0 L1351.0,732.9 L1352.0,732.6 L1353.0,732.3 L1354.0,732.3 L1355.0,732.4 L1356.0,732.4 L1357.0,732.4 L1358.0,732.2 L1359.0,732.5 L1360.0,732.4 L1361.0,732.5 L1362.0,732.4 L1363.0,732.6 L1364.0,732.5 L1365.0,732.7 L1366.0,732.5 L1367.0,732.5 L1368.0,732.3 L1369.0,732.1 L1370.0,732.0 L1371.0,731.8 L1372.0,731.8 L1373.0,731.9 L1374.0,731.9 L1375.0,732.1 L1376.0,732.0 L1377.0,732.2 L1378.0,732.1 L1379.0,732.0 L1380.0,731.9 L1381.0,732.1 L1382.0,731.9 L1383.0,731.9 L1384.0,731.6 L1385.0,731.7 L1386.0,731.8 L1387.0,731.8 L1388.0,731.9 L1389.0,731.9 L1390.0,732.1 L1391.0,732.0 L1392.0,731.9 L1393.0,731.7 L1394.0,731.7 L1395.0,731.7 L1396.0,731.7 L1397.0,731.6 L1398.0,731.5 L1399.0,731.7 L1400.0,731.8 L1401.0,731.9 L1402.0,731.9 L1403.0,731.7 L1404.0,731.5 L1405.0,731.5 L1406.0,731.7 L1407.0,731.5 L1408.0,731.2 L1409.0,731.0 L1410.0,730.9 L1411.0,730.9 L1412.0,730.8 L1413.0,731.0 L1414.0,731.2 L1415.0,731.5 L1416.0,731.3 L1417.0,731.2 L1418.0,731.1 L1419.0,731.1 L1420.0,731.1 L1421.0,731.2 L1422.0,731.3 L1423.0,731.3 L1424.0,731.0 L1425.0,731.1 L1426.0,731.1 L1427.0,731.2 L1428.0,731.1 L1429.0,730.8 L1430.0,730.7 L1431.0,730.7 L1432.0,730.6 L1433.0,730.5 L1434.0,730.6 L1435.0,730.5 L1436.0,730.6 L1437.0,730.5 L1438.0,730.4 L1439.0,730.3 L1440.0,730.4 L1441.0,730.6 L1442.0,730.4 L1443.0,730.6 L1444.0,730.7 L1445.0,731.0 L1446.0,730.6 L1447.0,730.4 L1448.0,730.0 L1449.0,730.2 L1450.0,730.2 L1451.0,730.2 L1452.0,730.1 L1453.0,730.3 L1454.0,730.6 L1455.0,730.5 L1456.0,730.1 L1457.0,730.2 L1458.0,730.3 L1459.0,730.5 L1460.0,730.1 L1461.0,729.9 L1462.0,729.8 L1463.0,730.0 L1464.0,729.9 L1465.0,730.0 L1466.0,730.1 L1467.0,730.4 L1468.0,730.0 L1469.0,730.1 L1470.0,729.7 L1471.0,730.0 L1472.0,729.9 L1473.0,729.9 L1474.0,729.8 L1475.0,730.0 L1476.0,729.9 L1477.0,729.7 L1478.0,729.5 L1479.0,729.5 L1480.0,729.5 L1481.0,729.3 L1482.0,729.2 L1483.0,729.2 L1484.0,729.2 L1485.0,729.3 L1486.0,729.5 L1487.0,729.5 L1488.0,729.6 L1489.0,729.3 L1490.0,729.3 L1491.0,727.6 L1492.0,726.1 L1493.0,724.5 L1494.0,724.9 L1495.0,725.1 L1496.0,725.2 L1497.0,725.2 L1498.0,725.4 L1499.0,725.4 L1500.0,725.7 L1501.0,725.5 L1502.0,725.7 L1503.0,725.7 L1504.0,725.7 L1505.0,725.8 L1506.0,725.7 L1507.0,726.0 L1508.0,726.0 L1509.0,726.1 L1510.0,726.0 L1511.0,726.2 L1512.0,726.0 L1513.0,725.9 L1514.0,725.7 L1515.0,725.6 L1516.0,725.5 L1517.0,725.8 L1518.0,725.9 L1519.0,726.0 L1520.0,725.7 L1521.0,726.0 L1522.0,726.4 L1523.0,726.6 L1524.0,726.4 L1525.0,726.2 L1526.0,726.1 L1527.0,726.2 L1528.0,726.2 L1529.0,726.3 L1530.0,726.2 L1531.0,726.6 L1532.0,726.8 L1533.0,726.9 L1534.0,726.5 L1535.0,726.5 L1536.0,726.4 L1537.0,726.4 L1538.0,726.0 L1539.0,726.0 L1540.0,726.0 L1541.0,726.2 L1542.0,726.1 L1543.0,726.1 L1544.0,725.9 L1545.0,725.9 L1546.0,725.7 L1547.0,725.9 L1548.0,725.7 L1549.0,725.7 L1550.0,725.6 L1551.0,725.7 L1552.0,725.9 L1553.0,726.0 L1554.0,726.2 L1555.0,726.2 L1556.0,726.3 L1557.0,726.3 L1557.5,726.4 L1557.5,732.5 L1557.0,732.7 L1556.0,732.7 L1555.0,732.5 L1554.0,732.4 L1553.0,732.5 L1552.0,732.7 L1551.0,732.7 L1550.0,732.7 L1549.0,732.7 L1548.0,732.8 L1547.0,732.8 L1546.0,732.7 L1545.0,732.6 L1544.0,732.6 L1543.0,732.6 L1542.0,732.8 L1541.0,732.9 L1540.0,732.8 L1539.0,732.7 L1538.0,732.7 L1537.0,732.7 L1536.0,732.8 L1535.0,732.8 L1534.0,732.8 L1533.0,732.9 L1532.0,732.7 L1531.0,732.6 L1530.0,732.5 L1529.0,732.5 L1528.0,732.6 L1527.0,732.7 L1526.0,732.9 L1525.0,733.0 L1524.0,732.9 L1523.0,732.9 L1522.0,732.9 L1521.0,732.8 L1520.0,732.7 L1519.0,732.5 L1518.0,732.5 L1517.0,732.5 L1516.0,732.6 L1515.0,732.7 L1514.0,732.8 L1513.0,732.8 L1512.0,733.0 L1511.0,733.0 L1510.0,733.0 L1509.0,733.0 L1508.0,732.9 L1507.0,732.8 L1506.0,732.8 L1505.0,732.8 L1504.0,732.9 L1503.0,732.8 L1502.0,732.8 L1501.0,732.7 L1500.0,732.8 L1499.0,732.9 L1498.0,733.0 L1497.0,733.0 L1496.0,732.8 L1495.0,732.8 L1494.0,732.7 L1493.0,732.8 L1492.0,732.9 L1491.0,732.9 L1490.0,732.8 L1489.0,732.8 L1488.0,732.8 L1487.0,732.9 L1486.0,732.7 L1485.0,732.7 L1484.0,732.7 L1483.0,732.8 L1482.0,733.0 L1481.0,733.1 L1480.0,733.0 L1479.0,732.9 L1478.0,732.8 L1477.0,732.8 L1476.0,732.8 L1475.0,732.8 L1474.0,732.9 L1473.0,732.9 L1472.0,732.9 L1471.0,732.7 L1470.0,732.7 L1469.0,732.7 L1468.0,732.7 L1467.0,732.7 L1466.0,732.7 L1465.0,732.8 L1464.0,732.7 L1463.0,732.7 L1462.0,732.8 L1461.0,732.8 L1460.0,732.9 L1459.0,732.8 L1458.0,733.0 L1457.0,733.1 L1456.0,733.2 L1455.0,733.2 L1454.0,733.0 L1453.0,733.0 L1452.0,733.0 L1451.0,733.1 L1450.0,733.1 L1449.0,733.2 L1448.0,733.2 L1447.0,733.1 L1446.0,733.0 L1445.0,732.9 L1444.0,732.9 L1443.0,732.9 L1442.0,733.0 L1441.0,733.0 L1440.0,732.9 L1439.0,732.9 L1438.0,732.9 L1437.0,733.0 L1436.0,733.2 L1435.0,733.2 L1434.0,733.1 L1433.0,733.0 L1432.0,733.1 L1431.0,733.2 L1430.0,733.3 L1429.0,733.2 L1428.0,733.2 L1427.0,733.0 L1426.0,733.1 L1425.0,733.1 L1424.0,733.1 L1423.0,733.0 L1422.0,733.0 L1421.0,733.0 L1420.0,733.0 L1419.0,732.9 L1418.0,733.0 L1417.0,733.0 L1416.0,733.1 L1415.0,733.1 L1414.0,733.1 L1413.0,733.1 L1412.0,733.3 L1411.0,733.4 L1410.0,733.3 L1409.0,733.1 L1408.0,733.2 L1407.0,733.1 L1406.0,733.3 L1405.0,733.3 L1404.0,733.3 L1403.0,733.3 L1402.0,733.2 L1401.0,733.3 L1400.0,733.2 L1399.0,733.3 L1398.0,733.3 L1397.0,733.4 L1396.0,733.4 L1395.0,733.3 L1394.0,733.2 L1393.0,733.1 L1392.0,733.3 L1391.0,733.3 L1390.0,733.3 L1389.0,733.3 L1388.0,733.3 L1387.0,733.5 L1386.0,733.5 L1385.0,733.5 L1384.0,733.5 L1383.0,733.4 L1382.0,733.4 L1381.0,733.5 L1380.0,733.5 L1379.0,733.5 L1378.0,733.4 L1377.0,733.5 L1376.0,733.5 L1375.0,733.5 L1374.0,733.5 L1373.0,733.4 L1372.0,733.3 L1371.0,733.4 L1370.0,733.5 L1369.0,733.6 L1368.0,733.6 L1367.0,733.6 L1366.0,733.7 L1365.0,733.6 L1364.0,733.6 L1363.0,733.5 L1362.0,733.5 L1361.0,733.7 L1360.0,733.7 L1359.0,733.8 L1358.0,733.7 L1357.0,733.9 L1356.0,733.9 L1355.0,733.9 L1354.0,733.9 L1353.0,733.7 L1352.0,733.7 L1351.0,733.8 L1350.0,733.8 L1349.0,733.7 L1348.0,733.7 L1347.0,733.7 L1346.0,733.8 L1345.0,733.7 L1344.0,733.8 L1343.0,733.8 L1342.0,733.8 L1341.0,733.9 L1340.0,733.8 L1339.0,733.9 L1338.0,733.9 Z" fill="url(#gY)"/><path d="M1338.0,733.9 L1339.0,733.9 L1340.0,733.8 L1341.0,733.9 L1342.0,733.8 L1343.0,733.8 L1344.0,733.8 L1345.0,733.7 L1346.0,733.8 L1347.0,733.7 L1348.0,733.7 L1349.0,733.7 L1350.0,733.8 L1351.0,733.8 L1352.0,733.7 L1353.0,733.7 L1354.0,733.9 L1355.0,733.9 L1356.0,733.9 L1357.0,733.9 L1358.0,733.7 L1359.0,733.8 L1360.0,733.7 L1361.0,733.7 L1362.0,733.5 L1363.0,733.5 L1364.0,733.6 L1365.0,733.6 L1366.0,733.7 L1367.0,733.6 L1368.0,733.6 L1369.0,733.6 L1370.0,733.5 L1371.0,733.4 L1372.0,733.3 L1373.0,733.4 L1374.0,733.5 L1375.0,733.5 L1376.0,733.5 L1377.0,733.5 L1378.0,733.4 L1379.0,733.5 L1380.0,733.5 L1381.0,733.5 L1382.0,733.4 L1383.0,733.4 L1384.0,733.5 L1385.0,733.5 L1386.0,733.5 L1387.0,733.5 L1388.0,733.3 L1389.0,733.3 L1390.0,733.3 L1391.0,733.3 L1392.0,733.3 L1393.0,733.1 L1394.0,733.2 L1395.0,733.3 L1396.0,733.4 L1397.0,733.4 L1398.0,733.3 L1399.0,733.3 L1400.0,733.2 L1401.0,733.3 L1402.0,733.2 L1403.0,733.3 L1404.0,733.3 L1405.0,733.3 L1406.0,733.3 L1407.0,733.1 L1408.0,733.2 L1409.0,733.1 L1410.0,733.3 L1411.0,733.4 L1412.0,733.3 L1413.0,733.1 L1414.0,733.1 L1415.0,733.1 L1416.0,733.1 L1417.0,733.0 L1418.0,733.0 L1419.0,732.9 L1420.0,733.0 L1421.0,733.0 L1422.0,733.0 L1423.0,733.0 L1424.0,733.1 L1425.0,733.1 L1426.0,733.1 L1427.0,733.0 L1428.0,733.2 L1429.0,733.2 L1430.0,733.3 L1431.0,733.2 L1432.0,733.1 L1433.0,733.0 L1434.0,733.1 L1435.0,733.2 L1436.0,733.2 L1437.0,733.0 L1438.0,732.9 L1439.0,732.9 L1440.0,732.9 L1441.0,733.0 L1442.0,733.0 L1443.0,732.9 L1444.0,732.9 L1445.0,732.9 L1446.0,733.0 L1447.0,733.1 L1448.0,733.2 L1449.0,733.2 L1450.0,733.1 L1451.0,733.1 L1452.0,733.0 L1453.0,733.0 L1454.0,733.0 L1455.0,733.2 L1456.0,733.2 L1457.0,733.1 L1458.0,733.0 L1459.0,732.8 L1460.0,732.9 L1461.0,732.8 L1462.0,732.8 L1463.0,732.7 L1464.0,732.7 L1465.0,732.8 L1466.0,732.7 L1467.0,732.7 L1468.0,732.7 L1469.0,732.7 L1470.0,732.7 L1471.0,732.7 L1472.0,732.9 L1473.0,732.9 L1474.0,732.9 L1475.0,732.8 L1476.0,732.8 L1477.0,732.8 L1478.0,732.8 L1479.0,732.9 L1480.0,733.0 L1481.0,733.1 L1482.0,733.0 L1483.0,732.8 L1484.0,732.7 L1485.0,732.7 L1486.0,732.7 L1487.0,732.9 L1488.0,732.8 L1489.0,732.8 L1490.0,732.8 L1491.0,732.9 L1492.0,732.9 L1493.0,732.8 L1494.0,732.7 L1495.0,732.8 L1496.0,732.8 L1497.0,733.0 L1498.0,733.0 L1499.0,732.9 L1500.0,732.8 L1501.0,732.7 L1502.0,732.8 L1503.0,732.8 L1504.0,732.9 L1505.0,732.8 L1506.0,732.8 L1507.0,732.8 L1508.0,732.9 L1509.0,733.0 L1510.0,733.0 L1511.0,733.0 L1512.0,733.0 L1513.0,732.8 L1514.0,732.8 L1515.0,732.7 L1516.0,732.6 L1517.0,732.5 L1518.0,732.5 L1519.0,732.5 L1520.0,732.7 L1521.0,732.8 L1522.0,732.9 L1523.0,732.9 L1524.0,732.9 L1525.0,733.0 L1526.0,732.9 L1527.0,732.7 L1528.0,732.6 L1529.0,732.5 L1530.0,732.5 L1531.0,732.6 L1532.0,732.7 L1533.0,732.9 L1534.0,732.8 L1535.0,732.8 L1536.0,732.8 L1537.0,732.7 L1538.0,732.7 L1539.0,732.7 L1540.0,732.8 L1541.0,732.9 L1542.0,732.8 L1543.0,732.6 L1544.0,732.6 L1545.0,732.6 L1546.0,732.7 L1547.0,732.8 L1548.0,732.8 L1549.0,732.7 L1550.0,732.7 L1551.0,732.7 L1552.0,732.7 L1553.0,732.5 L1554.0,732.4 L1555.0,732.5 L1556.0,732.7 L1557.0,732.7 L1557.5,732.5 L1557.5,735.0 L1557.0,735.0 L1556.0,735.0 L1555.0,735.0 L1554.0,735.0 L1553.0,735.0 L1552.0,735.0 L1551.0,735.0 L1550.0,735.0 L1549.0,735.0 L1548.0,735.0 L1547.0,735.0 L1546.0,735.0 L1545.0,735.0 L1544.0,735.0 L1543.0,735.0 L1542.0,735.0 L1541.0,735.0 L1540.0,735.0 L1539.0,735.0 L1538.0,735.0 L1537.0,735.0 L1536.0,735.0 L1535.0,735.0 L1534.0,735.0 L1533.0,735.0 L1532.0,735.0 L1531.0,735.0 L1530.0,735.0 L1529.0,735.0 L1528.0,735.0 L1527.0,735.0 L1526.0,735.0 L1525.0,735.0 L1524.0,735.0 L1523.0,735.0 L1522.0,735.0 L1521.0,735.0 L1520.0,735.0 L1519.0,735.0 L1518.0,735.0 L1517.0,735.0 L1516.0,735.0 L1515.0,735.0 L1514.0,735.0 L1513.0,735.0 L1512.0,735.0 L1511.0,735.0 L1510.0,735.0 L1509.0,735.0 L1508.0,735.0 L1507.0,735.0 L1506.0,735.0 L1505.0,735.0 L1504.0,735.0 L1503.0,735.0 L1502.0,735.0 L1501.0,735.0 L1500.0,735.0 L1499.0,735.0 L1498.0,735.0 L1497.0,735.0 L1496.0,735.0 L1495.0,735.0 L1494.0,735.0 L1493.0,735.0 L1492.0,735.0 L1491.0,735.0 L1490.0,735.0 L1489.0,735.0 L1488.0,735.0 L1487.0,735.0 L1486.0,735.0 L1485.0,735.0 L1484.0,735.0 L1483.0,735.0 L1482.0,735.0 L1481.0,735.0 L1480.0,735.0 L1479.0,735.0 L1478.0,735.0 L1477.0,735.0 L1476.0,735.0 L1475.0,735.0 L1474.0,735.0 L1473.0,735.0 L1472.0,735.0 L1471.0,735.0 L1470.0,735.0 L1469.0,735.0 L1468.0,735.0 L1467.0,735.0 L1466.0,735.0 L1465.0,735.0 L1464.0,735.0 L1463.0,735.0 L1462.0,735.0 L1461.0,735.0 L1460.0,735.0 L1459.0,735.0 L1458.0,735.0 L1457.0,735.0 L1456.0,735.0 L1455.0,735.0 L1454.0,735.0 L1453.0,735.0 L1452.0,735.0 L1451.0,735.0 L1450.0,735.0 L1449.0,735.0 L1448.0,735.0 L1447.0,735.0 L1446.0,735.0 L1445.0,735.0 L1444.0,735.0 L1443.0,735.0 L1442.0,735.0 L1441.0,735.0 L1440.0,735.0 L1439.0,735.0 L1438.0,735.0 L1437.0,735.0 L1436.0,735.0 L1435.0,735.0 L1434.0,735.0 L1433.0,735.0 L1432.0,735.0 L1431.0,735.0 L1430.0,735.0 L1429.0,735.0 L1428.0,735.0 L1427.0,735.0 L1426.0,735.0 L1425.0,735.0 L1424.0,735.0 L1423.0,735.0 L1422.0,735.0 L1421.0,735.0 L1420.0,735.0 L1419.0,735.0 L1418.0,735.0 L1417.0,735.0 L1416.0,735.0 L1415.0,735.0 L1414.0,735.0 L1413.0,735.0 L1412.0,735.0 L1411.0,735.0 L1410.0,735.0 L1409.0,735.0 L1408.0,735.0 L1407.0,735.0 L1406.0,735.0 L1405.0,735.0 L1404.0,735.0 L1403.0,735.0 L1402.0,735.0 L1401.0,735.0 L1400.0,735.0 L1399.0,735.0 L1398.0,735.0 L1397.0,735.0 L1396.0,735.0 L1395.0,735.0 L1394.0,735.0 L1393.0,735.0 L1392.0,735.0 L1391.0,735.0 L1390.0,735.0 L1389.0,735.0 L1388.0,735.0 L1387.0,735.0 L1386.0,735.0 L1385.0,735.0 L1384.0,735.0 L1383.0,735.0 L1382.0,735.0 L1381.0,735.0 L1380.0,735.0 L1379.0,735.0 L1378.0,735.0 L1377.0,735.0 L1376.0,735.0 L1375.0,735.0 L1374.0,735.0 L1373.0,735.0 L1372.0,735.0 L1371.0,735.0 L1370.0,735.0 L1369.0,735.0 L1368.0,735.0 L1367.0,735.0 L1366.0,735.0 L1365.0,735.0 L1364.0,735.0 L1363.0,735.0 L1362.0,735.0 L1361.0,735.0 L1360.0,735.0 L1359.0,735.0 L1358.0,735.0 L1357.0,735.0 L1356.0,735.0 L1355.0,735.0 L1354.0,735.0 L1353.0,735.0 L1352.0,735.0 L1351.0,735.0 L1350.0,735.0 L1349.0,735.0 L1348.0,735.0 L1347.0,735.0 L1346.0,735.0 L1345.0,735.0 L1344.0,735.0 L1343.0,735.0 L1342.0,735.0 L1341.0,735.0 L1340.0,735.0 L1339.0,735.0 L1338.0,735.0 Z" fill="#5aa0c8"/><g stroke="#000" stroke-opacity="0.4" stroke-width="1.2" stroke-dasharray="5.5 4.5"><line x1="138" y1="338.5" x2="1572" y2="338.5"/><line x1="138" y1="404.5" x2="1572" y2="404.5"/><line x1="138" y1="470.5" x2="1572" y2="470.5"/><line x1="138" y1="536.5" x2="1572" y2="536.5"/><line x1="138" y1="602.5" x2="1572" y2="602.5"/><line x1="138" y1="668.5" x2="1572" y2="668.5"/><line x1="203" y1="338.5" x2="203" y2="749"/><line x1="394" y1="338.5" x2="394" y2="749"/><line x1="586" y1="338.5" x2="586" y2="749"/><line x1="777" y1="338.5" x2="777" y2="749"/><line x1="967" y1="338.5" x2="967" y2="749"/><line x1="1159" y1="338.5" x2="1159" y2="749"/><line x1="1350" y1="338.5" x2="1350" y2="749"/><line x1="1541" y1="338.5" x2="1541" y2="749"/></g><g stroke="#9b9b9b" stroke-width="1.2"><line x1="203" y1="736" x2="203" y2="749"/><line x1="394" y1="736" x2="394" y2="749"/><line x1="586" y1="736" x2="586" y2="749"/><line x1="777" y1="736" x2="777" y2="749"/><line x1="967" y1="736" x2="967" y2="749"/><line x1="1159" y1="736" x2="1159" y2="749"/><line x1="1350" y1="736" x2="1350" y2="749"/><line x1="1541" y1="736" x2="1541" y2="749"/></g><path d="M1338.0,733.5 L1339.0,733.4 L1340.0,733.2 L1341.0,733.0 L1342.0,732.7 L1343.0,732.5 L1344.0,732.7 L1345.0,732.9 L1346.0,733.1 L1347.0,733.0 L1348.0,732.9 L1349.0,733.0 L1350.0,733.0 L1351.0,732.9 L1352.0,732.6 L1353.0,732.3 L1354.0,732.3 L1355.0,732.4 L1356.0,732.4 L1357.0,732.4 L1358.0,732.2 L1359.0,732.5 L1360.0,732.4 L1361.0,732.5 L1362.0,732.4 L1363.0,732.6 L1364.0,732.5 L1365.0,732.7 L1366.0,732.5 L1367.0,732.5 L1368.0,732.3 L1369.0,732.1 L1370.0,732.0 L1371.0,731.8 L1372.0,731.8 L1373.0,731.9 L1374.0,731.9 L1375.0,732.1 L1376.0,732.0 L1377.0,732.2 L1378.0,732.1 L1379.0,732.0 L1380.0,731.9 L1381.0,732.1 L1382.0,731.9 L1383.0,731.9 L1384.0,731.6 L1385.0,731.7 L1386.0,731.8 L1387.0,731.8 L1388.0,731.9 L1389.0,731.9 L1390.0,732.1 L1391.0,732.0 L1392.0,731.9 L1393.0,731.7 L1394.0,731.7 L1395.0,731.7 L1396.0,731.7 L1397.0,731.6 L1398.0,731.5 L1399.0,731.7 L1400.0,731.8 L1401.0,731.9 L1402.0,731.9 L1403.0,731.7 L1404.0,731.5 L1405.0,731.5 L1406.0,731.7 L1407.0,731.5 L1408.0,731.2 L1409.0,731.0 L1410.0,730.9 L1411.0,730.9 L1412.0,730.8 L1413.0,731.0 L1414.0,731.2 L1415.0,731.5 L1416.0,731.3 L1417.0,731.2 L1418.0,731.1 L1419.0,731.1 L1420.0,731.1 L1421.0,731.2 L1422.0,731.3 L1423.0,731.3 L1424.0,731.0 L1425.0,731.1 L1426.0,731.1 L1427.0,731.2 L1428.0,731.1 L1429.0,730.8 L1430.0,730.7 L1431.0,730.7 L1432.0,730.6 L1433.0,730.5 L1434.0,730.6 L1435.0,730.5 L1436.0,730.6 L1437.0,730.5 L1438.0,730.4 L1439.0,730.3 L1440.0,730.4 L1441.0,730.6 L1442.0,730.4 L1443.0,730.6 L1444.0,730.7 L1445.0,731.0 L1446.0,730.6 L1447.0,730.4 L1448.0,730.0 L1449.0,730.2 L1450.0,730.2 L1451.0,730.2 L1452.0,730.1 L1453.0,730.3 L1454.0,730.6 L1455.0,730.5 L1456.0,730.1 L1457.0,730.2 L1458.0,730.3 L1459.0,730.5 L1460.0,730.1 L1461.0,729.9 L1462.0,729.8 L1463.0,730.0 L1464.0,729.9 L1465.0,730.0 L1466.0,730.1 L1467.0,730.4 L1468.0,730.0 L1469.0,730.1 L1470.0,729.7 L1471.0,730.0 L1472.0,729.9 L1473.0,729.9 L1474.0,729.8 L1475.0,730.0 L1476.0,729.9 L1477.0,729.7 L1478.0,729.5 L1479.0,729.5 L1480.0,729.5 L1481.0,729.3 L1482.0,729.2 L1483.0,729.2 L1484.0,729.2 L1485.0,729.3 L1486.0,729.5 L1487.0,729.5 L1488.0,729.6 L1489.0,729.3 L1490.0,729.3 L1491.0,727.6 L1492.0,726.1 L1493.0,724.5 L1494.0,724.9 L1495.0,725.1 L1496.0,725.2 L1497.0,725.2 L1498.0,725.4 L1499.0,725.4 L1500.0,725.7 L1501.0,725.5 L1502.0,725.7 L1503.0,725.7 L1504.0,725.7 L1505.0,725.8 L1506.0,725.7 L1507.0,726.0 L1508.0,726.0 L1509.0,726.1 L1510.0,726.0 L1511.0,726.2 L1512.0,726.0 L1513.0,725.9 L1514.0,725.7 L1515.0,725.6 L1516.0,725.5 L1517.0,725.8 L1518.0,725.9 L1519.0,726.0 L1520.0,725.7 L1521.0,726.0 L1522.0,726.4 L1523.0,726.6 L1524.0,726.4 L1525.0,726.2 L1526.0,726.1 L1527.0,726.2 L1528.0,726.2 L1529.0,726.3 L1530.0,726.2 L1531.0,726.6 L1532.0,726.8 L1533.0,726.9 L1534.0,726.5 L1535.0,726.5 L1536.0,726.4 L1537.0,726.4 L1538.0,726.0 L1539.0,726.0 L1540.0,726.0 L1541.0,726.2 L1542.0,726.1 L1543.0,726.1 L1544.0,725.9 L1545.0,725.9 L1546.0,725.7 L1547.0,725.9 L1548.0,725.7 L1549.0,725.7 L1550.0,725.6 L1551.0,725.7 L1552.0,725.9 L1553.0,726.0 L1554.0,726.2 L1555.0,726.2 L1556.0,726.3 L1557.0,726.3 L1557.5,726.4" fill="none" stroke="#f5c400" stroke-width="1.2"/><path d="M1338.0,731.1 L1339.0,731.4 L1340.0,730.8 L1341.0,730.9 L1342.0,730.2 L1343.0,729.8 L1344.0,729.6 L1345.0,729.5 L1346.0,729.7 L1347.0,729.3 L1348.0,729.2 L1349.0,728.7 L1350.0,728.5 L1351.0,728.2 L1352.0,728.8 L1353.0,729.1 L1354.0,729.4 L1355.0,729.1 L1356.0,729.2 L1357.0,729.0 L1358.0,729.1 L1359.0,728.4 L1360.0,727.8 L1361.0,727.2 L1362.0,727.3 L1363.0,727.3 L1364.0,728.0 L1365.0,728.2 L1366.0,728.6 L1367.0,728.4 L1368.0,728.5 L1369.0,728.4 L1370.0,727.7 L1371.0,727.8 L1372.0,728.0 L1373.0,728.5 L1374.0,728.2 L1375.0,728.1 L1376.0,727.7 L1377.0,727.8 L1378.0,727.4 L1379.0,727.4 L1380.0,726.9 L1381.0,727.4 L1382.0,727.5 L1383.0,728.0 L1384.0,728.2 L1385.0,728.5 L1386.0,728.2 L1387.0,727.7 L1388.0,727.9 L1389.0,728.3 L1390.0,728.4 L1391.0,728.4 L1392.0,727.8 L1393.0,727.3 L1394.0,727.0 L1395.0,727.6 L1396.0,727.8 L1397.0,728.1 L1398.0,727.4 L1399.0,727.2 L1400.0,726.9 L1401.0,727.5 L1402.0,728.1 L1403.0,728.4 L1404.0,728.1 L1405.0,727.9 L1406.0,727.6 L1407.0,727.8 L1408.0,727.4 L1409.0,727.8 L1410.0,727.5 L1411.0,728.3 L1412.0,728.3 L1413.0,728.1 L1414.0,727.6 L1415.0,727.4 L1416.0,728.3 L1417.0,728.3 L1418.0,727.7 L1419.0,727.0 L1420.0,727.4 L1421.0,727.3 L1422.0,727.7 L1423.0,726.9 L1424.0,727.2 L1425.0,727.5 L1426.0,727.5 L1427.0,727.7 L1428.0,727.3 L1429.0,728.0 L1430.0,727.8 L1431.0,727.5 L1432.0,727.5 L1433.0,727.3 L1434.0,727.0 L1435.0,726.0 L1436.0,726.0 L1437.0,726.3 L1438.0,726.5 L1439.0,726.1 L1440.0,725.9 L1441.0,725.9 L1442.0,726.5 L1443.0,726.1 L1444.0,726.4 L1445.0,726.3 L1446.0,726.4 L1447.0,726.5 L1448.0,726.3 L1449.0,726.9 L1450.0,726.3 L1451.0,725.9 L1452.0,725.3 L1453.0,725.9 L1454.0,726.0 L1455.0,725.9 L1456.0,725.3 L1457.0,724.9 L1458.0,724.6 L1459.0,724.2 L1460.0,724.6 L1461.0,724.8 L1462.0,725.5 L1463.0,724.9 L1464.0,724.8 L1465.0,724.3 L1466.0,724.1 L1467.0,724.1 L1468.0,724.4 L1469.0,724.9 L1470.0,725.2 L1471.0,724.8 L1472.0,724.7 L1473.0,724.7 L1474.0,724.5 L1475.0,724.2 L1476.0,723.2 L1477.0,723.2 L1478.0,722.9 L1479.0,723.4 L1480.0,723.2 L1481.0,722.9 L1482.0,722.1 L1483.0,722.3 L1484.0,722.0 L1485.0,722.3 L1486.0,721.6 L1487.0,721.6 L1488.0,721.8 L1489.0,722.2 L1490.0,722.1 L1491.0,719.3 L1492.0,715.3 L1493.0,713.6 L1494.0,713.4 L1495.0,713.4 L1496.0,713.1 L1497.0,713.0 L1498.0,713.8 L1499.0,714.2 L1500.0,714.3 L1501.0,714.6 L1502.0,715.3 L1503.0,715.8 L1504.0,715.3 L1505.0,714.8 L1506.0,714.7 L1507.0,715.1 L1508.0,715.3 L1509.0,715.7 L1510.0,715.8 L1511.0,716.5 L1512.0,717.4 L1513.0,718.1 L1514.0,718.2 L1515.0,718.0 L1516.0,718.1 L1517.0,718.3 L1518.0,718.5 L1519.0,718.3 L1520.0,718.4 L1521.0,719.2 L1522.0,719.1 L1523.0,719.1 L1524.0,718.7 L1525.0,719.2 L1526.0,718.8 L1527.0,718.3 L1528.0,717.6 L1529.0,717.6 L1530.0,717.6 L1531.0,718.1 L1532.0,718.4 L1533.0,718.7 L1534.0,717.6 L1535.0,716.7 L1536.0,716.4 L1537.0,717.1 L1538.0,717.4 L1539.0,717.1 L1540.0,716.1 L1541.0,715.9 L1542.0,716.0 L1543.0,716.7 L1544.0,717.0 L1545.0,716.9 L1546.0,716.2 L1547.0,715.3 L1548.0,714.4 L1549.0,714.5 L1550.0,714.9 L1551.0,715.5 L1552.0,715.6 L1553.0,715.4 L1554.0,715.1 L1555.0,714.7 L1556.0,714.5 L1557.0,713.6 L1557.5,713.2" fill="none" stroke="#f04a12" stroke-width="1.8"/><path d="M1338.0,731.1 L1339.0,731.1 L1340.0,730.8 L1341.0,730.6 L1342.0,729.8 L1343.0,729.3 L1344.0,729.3 L1345.0,729.5 L1346.0,729.2 L1347.0,728.5 L1348.0,728.3 L1349.0,728.4 L1350.0,728.5 L1351.0,728.1 L1352.0,728.0 L1353.0,727.6 L1354.0,727.5 L1355.0,727.2 L1356.0,727.7 L1357.0,727.8 L1358.0,728.0 L1359.0,727.5 L1360.0,727.0 L1361.0,726.4 L1362.0,726.6 L1363.0,726.8 L1364.0,726.7 L1365.0,725.8 L1366.0,725.5 L1367.0,725.6 L1368.0,725.8 L1369.0,725.4 L1370.0,725.3 L1371.0,725.5 L1372.0,725.3 L1373.0,724.7 L1374.0,724.1 L1375.0,724.1 L1376.0,724.4 L1377.0,724.1 L1378.0,724.2 L1379.0,724.1 L1380.0,724.2 L1381.0,723.8 L1382.0,724.0 L1383.0,723.8 L1384.0,724.3 L1385.0,723.7 L1386.0,723.7 L1387.0,723.7 L1388.0,723.7 L1389.0,724.3 L1390.0,724.1 L1391.0,724.0 L1392.0,723.5 L1393.0,723.4 L1394.0,723.8 L1395.0,724.3 L1396.0,724.2 L1397.0,724.0 L1398.0,723.4 L1399.0,724.1 L1400.0,723.9 L1401.0,723.6 L1402.0,722.8 L1403.0,722.8 L1404.0,723.3 L1405.0,723.8 L1406.0,723.9 L1407.0,723.8 L1408.0,723.7 L1409.0,723.2 L1410.0,722.5 L1411.0,722.3 L1412.0,722.5 L1413.0,722.2 L1414.0,721.9 L1415.0,721.4 L1416.0,721.6 L1417.0,721.2 L1418.0,720.8 L1419.0,720.4 L1420.0,720.2 L1421.0,720.2 L1422.0,720.8 L1423.0,720.5 L1424.0,720.8 L1425.0,720.1 L1426.0,720.1 L1427.0,719.9 L1428.0,720.2 L1429.0,720.1 L1430.0,719.4 L1431.0,719.0 L1432.0,718.8 L1433.0,719.2 L1434.0,718.8 L1435.0,718.6 L1436.0,718.4 L1437.0,718.1 L1438.0,717.9 L1439.0,717.6 L1440.0,718.0 L1441.0,717.5 L1442.0,716.7 L1443.0,716.0 L1444.0,716.5 L1445.0,716.4 L1446.0,716.7 L1447.0,716.5 L1448.0,716.4 L1449.0,715.8 L1450.0,715.7 L1451.0,715.7 L1452.0,715.5 L1453.0,715.1 L1454.0,714.6 L1455.0,714.5 L1456.0,713.7 L1457.0,713.8 L1458.0,714.1 L1459.0,714.4 L1460.0,714.3 L1461.0,713.5 L1462.0,713.0 L1463.0,712.4 L1464.0,712.9 L1465.0,713.3 L1466.0,713.1 L1467.0,712.5 L1468.0,712.0 L1469.0,711.9 L1470.0,712.3 L1471.0,712.0 L1472.0,712.1 L1473.0,711.9 L1474.0,712.3 L1475.0,712.1 L1476.0,711.9 L1477.0,711.4 L1478.0,711.0 L1479.0,710.7 L1480.0,710.9 L1481.0,710.6 L1482.0,710.4 L1483.0,710.2 L1484.0,710.3 L1485.0,710.0 L1486.0,709.4 L1487.0,709.5 L1488.0,709.6 L1489.0,710.2 L1490.0,710.3 L1491.0,710.7 L1492.0,710.0 L1493.0,707.0 L1494.0,700.2 L1495.0,699.3 L1496.0,700.0 L1497.0,700.4 L1498.0,700.4 L1499.0,700.3 L1500.0,700.6 L1501.0,701.1 L1502.0,701.4 L1503.0,701.7 L1504.0,701.8 L1505.0,701.4 L1506.0,701.5 L1507.0,701.4 L1508.0,701.8 L1509.0,701.6 L1510.0,702.0 L1511.0,701.8 L1512.0,701.8 L1513.0,701.6 L1514.0,701.7 L1515.0,702.2 L1516.0,702.6 L1517.0,702.8 L1518.0,702.6 L1519.0,703.0 L1520.0,703.2 L1521.0,703.1 L1522.0,702.7 L1523.0,702.6 L1524.0,702.9 L1525.0,702.2 L1526.0,701.8 L1527.0,701.4 L1528.0,701.7 L1529.0,701.8 L1530.0,701.0 L1531.0,700.4 L1532.0,699.5 L1533.0,699.4 L1534.0,699.7 L1535.0,699.8 L1536.0,700.1 L1537.0,699.4 L1538.0,699.4 L1539.0,698.8 L1540.0,698.5 L1541.0,698.2 L1542.0,698.3 L1543.0,697.9 L1544.0,697.6 L1545.0,697.1 L1546.0,696.9 L1547.0,696.5 L1548.0,695.9 L1549.0,695.7 L1550.0,695.4 L1551.0,695.5 L1552.0,695.6 L1553.0,695.3 L1554.0,694.6 L1555.0,694.1 L1556.0,694.2 L1557.0,694.0 L1557.5,693.7" fill="none" stroke="#c3cde2" stroke-width="1.2"/><path d="M1338.0,728.2 L1339.0,728.6 L1340.0,728.6 L1341.0,728.2 L1342.0,727.2 L1343.0,726.8 L1344.0,727.1 L1345.0,727.5 L1346.0,727.0 L1347.0,726.3 L1348.0,726.2 L1349.0,726.3 L1350.0,726.3 L1351.0,725.6 L1352.0,726.1 L1353.0,725.9 L1354.0,726.0 L1355.0,725.1 L1356.0,725.1 L1357.0,725.2 L1358.0,725.8 L1359.0,725.5 L1360.0,724.5 L1361.0,724.0 L1362.0,723.7 L1363.0,723.2 L1364.0,723.2 L1365.0,723.3 L1366.0,724.1 L1367.0,723.3 L1368.0,723.6 L1369.0,723.0 L1370.0,722.5 L1371.0,721.3 L1372.0,721.2 L1373.0,721.6 L1374.0,722.5 L1375.0,721.7 L1376.0,721.5 L1377.0,720.7 L1378.0,721.0 L1379.0,720.2 L1380.0,719.9 L1381.0,719.9 L1382.0,720.7 L1383.0,720.4 L1384.0,720.3 L1385.0,720.1 L1386.0,721.0 L1387.0,720.6 L1388.0,719.7 L1389.0,719.6 L1390.0,720.4 L1391.0,720.8 L1392.0,719.7 L1393.0,719.5 L1394.0,719.3 L1395.0,720.2 L1396.0,719.8 L1397.0,720.2 L1398.0,719.3 L1399.0,719.4 L1400.0,718.6 L1401.0,718.6 L1402.0,718.3 L1403.0,718.7 L1404.0,718.1 L1405.0,717.0 L1406.0,716.2 L1407.0,716.2 L1408.0,716.1 L1409.0,715.4 L1410.0,715.0 L1411.0,715.3 L1412.0,716.2 L1413.0,715.8 L1414.0,715.6 L1415.0,715.3 L1416.0,715.2 L1417.0,715.4 L1418.0,714.6 L1419.0,715.2 L1420.0,714.7 L1421.0,715.3 L1422.0,714.8 L1423.0,714.6 L1424.0,714.4 L1425.0,714.5 L1426.0,714.7 L1427.0,714.4 L1428.0,714.4 L1429.0,713.5 L1430.0,713.6 L1431.0,713.6 L1432.0,713.8 L1433.0,713.8 L1434.0,714.1 L1435.0,714.3 L1436.0,713.5 L1437.0,713.0 L1438.0,712.4 L1439.0,712.2 L1440.0,711.9 L1441.0,711.7 L1442.0,711.9 L1443.0,711.8 L1444.0,711.5 L1445.0,711.6 L1446.0,710.9 L1447.0,711.5 L1448.0,711.5 L1449.0,711.8 L1450.0,710.8 L1451.0,710.3 L1452.0,709.9 L1453.0,710.8 L1454.0,710.1 L1455.0,710.5 L1456.0,710.4 L1457.0,710.9 L1458.0,710.6 L1459.0,709.5 L1460.0,709.6 L1461.0,708.8 L1462.0,709.3 L1463.0,708.9 L1464.0,708.1 L1465.0,707.5 L1466.0,707.2 L1467.0,706.7 L1468.0,705.8 L1469.0,705.2 L1470.0,704.9 L1471.0,705.1 L1472.0,704.2 L1473.0,704.4 L1474.0,703.0 L1475.0,702.8 L1476.0,702.4 L1477.0,701.9 L1478.0,701.1 L1479.0,700.1 L1480.0,699.7 L1481.0,698.9 L1482.0,698.0 L1483.0,697.3 L1484.0,698.2 L1485.0,698.6 L1486.0,699.3 L1487.0,698.2 L1488.0,698.2 L1489.0,697.1 L1490.0,697.4 L1491.0,697.0 L1492.0,697.1 L1493.0,694.1 L1494.0,685.7 L1495.0,684.5 L1496.0,684.7 L1497.0,684.4 L1498.0,685.1 L1499.0,685.0 L1500.0,685.6 L1501.0,685.6 L1502.0,685.4 L1503.0,686.4 L1504.0,686.3 L1505.0,686.7 L1506.0,686.7 L1507.0,686.7 L1508.0,686.8 L1509.0,687.0 L1510.0,686.7 L1511.0,687.7 L1512.0,687.4 L1513.0,688.3 L1514.0,688.8 L1515.0,689.4 L1516.0,689.6 L1517.0,689.1 L1518.0,688.6 L1519.0,687.9 L1520.0,687.3 L1521.0,687.6 L1522.0,687.6 L1523.0,687.7 L1524.0,687.6 L1525.0,686.8 L1526.0,686.1 L1527.0,685.4 L1528.0,684.8 L1529.0,684.1 L1530.0,683.4 L1531.0,683.1 L1532.0,683.1 L1533.0,682.5 L1534.0,682.7 L1535.0,682.5 L1536.0,682.1 L1537.0,681.7 L1538.0,681.2 L1539.0,680.7 L1540.0,680.6 L1541.0,679.9 L1542.0,679.6 L1543.0,678.2 L1544.0,678.2 L1545.0,678.6 L1546.0,679.0 L1547.0,678.4 L1548.0,677.2 L1549.0,675.9 L1550.0,675.8 L1551.0,675.7 L1552.0,675.7 L1553.0,675.3 L1554.0,674.8 L1555.0,675.0 L1556.0,674.7 L1557.0,666.1 L1557.5,667.7" fill="none" stroke="#7a22d8" stroke-width="1.8"/><path d="M1338.0,727.4 L1339.0,726.9 L1340.0,726.2 L1341.0,726.3 L1342.0,725.7 L1343.0,726.0 L1344.0,725.6 L1345.0,726.1 L1346.0,726.1 L1347.0,726.1 L1348.0,725.5 L1349.0,724.9 L1350.0,725.0 L1351.0,725.2 L1352.0,725.1 L1353.0,724.5 L1354.0,723.9 L1355.0,723.1 L1356.0,722.6 L1357.0,723.0 L1358.0,723.2 L1359.0,723.7 L1360.0,722.5 L1361.0,722.3 L1362.0,722.0 L1363.0,722.2 L1364.0,721.8 L1365.0,721.3 L1366.0,720.7 L1367.0,719.8 L1368.0,719.3 L1369.0,718.8 L1370.0,718.8 L1371.0,719.1 L1372.0,719.5 L1373.0,719.8 L1374.0,719.4 L1375.0,718.7 L1376.0,718.1 L1377.0,717.6 L1378.0,717.8 L1379.0,717.5 L1380.0,717.1 L1381.0,716.8 L1382.0,717.1 L1383.0,716.9 L1384.0,717.0 L1385.0,715.8 L1386.0,715.7 L1387.0,714.9 L1388.0,715.5 L1389.0,716.1 L1390.0,716.5 L1391.0,715.9 L1392.0,715.7 L1393.0,715.1 L1394.0,714.8 L1395.0,714.7 L1396.0,714.9 L1397.0,715.2 L1398.0,714.8 L1399.0,715.0 L1400.0,714.7 L1401.0,714.5 L1402.0,713.9 L1403.0,713.9 L1404.0,713.1 L1405.0,712.8 L1406.0,712.2 L1407.0,711.7 L1408.0,710.8 L1409.0,710.5 L1410.0,709.9 L1411.0,710.3 L1412.0,709.5 L1413.0,709.1 L1414.0,707.9 L1415.0,708.4 L1416.0,708.4 L1417.0,708.1 L1418.0,706.9 L1419.0,706.3 L1420.0,706.5 L1421.0,706.9 L1422.0,707.3 L1423.0,707.0 L1424.0,706.1 L1425.0,705.7 L1426.0,705.0 L1427.0,705.5 L1428.0,705.4 L1429.0,705.7 L1430.0,704.6 L1431.0,704.3 L1432.0,704.0 L1433.0,704.7 L1434.0,703.6 L1435.0,702.5 L1436.0,701.3 L1437.0,700.9 L1438.0,701.2 L1439.0,701.5 L1440.0,701.7 L1441.0,701.2 L1442.0,700.5 L1443.0,699.6 L1444.0,698.4 L1445.0,697.3 L1446.0,697.4 L1447.0,697.0 L1448.0,696.8 L1449.0,695.7 L1450.0,694.9 L1451.0,694.1 L1452.0,693.3 L1453.0,693.4 L1454.0,692.9 L1455.0,692.2 L1456.0,691.8 L1457.0,691.3 L1458.0,691.2 L1459.0,690.2 L1460.0,689.0 L1461.0,687.7 L1462.0,686.7 L1463.0,686.6 L1464.0,685.7 L1465.0,685.2 L1466.0,684.1 L1467.0,683.1 L1468.0,682.5 L1469.0,681.1 L1470.0,681.0 L1471.0,679.4 L1472.0,678.5 L1473.0,677.3 L1474.0,677.3 L1475.0,677.8 L1476.0,677.1 L1477.0,676.2 L1478.0,675.2 L1479.0,675.5 L1480.0,674.6 L1481.0,674.1 L1482.0,673.0 L1483.0,673.2 L1484.0,672.7 L1485.0,673.1 L1486.0,672.3 L1487.0,672.1 L1488.0,671.6 L1489.0,671.6 L1490.0,671.3 L1491.0,671.0 L1492.0,670.3 L1493.0,663.7 L1494.0,656.4 L1495.0,657.0 L1496.0,656.7 L1497.0,656.2 L1498.0,655.6 L1499.0,655.3 L1500.0,655.7 L1501.0,655.4 L1502.0,655.9 L1503.0,655.0 L1504.0,655.2 L1505.0,654.5 L1506.0,655.5 L1507.0,655.8 L1508.0,656.0 L1509.0,656.0 L1510.0,655.7 L1511.0,655.8 L1512.0,655.5 L1513.0,656.1 L1514.0,656.4 L1515.0,656.6 L1516.0,656.2 L1517.0,655.7 L1518.0,655.2 L1519.0,655.8 L1520.0,656.2 L1521.0,656.7 L1522.0,655.6 L1523.0,654.9 L1524.0,654.5 L1525.0,654.6 L1526.0,653.8 L1527.0,653.1 L1528.0,653.0 L1529.0,652.7 L1530.0,652.0 L1531.0,651.0 L1532.0,651.1 L1533.0,651.4 L1534.0,651.0 L1535.0,650.1 L1536.0,649.2 L1537.0,649.1 L1538.0,649.3 L1539.0,648.9 L1540.0,648.7 L1541.0,648.0 L1542.0,648.6 L1543.0,648.8 L1544.0,648.5 L1545.0,648.2 L1546.0,647.3 L1547.0,647.3 L1548.0,647.1 L1549.0,647.5 L1550.0,647.6 L1551.0,646.8 L1552.0,645.9 L1553.0,645.5 L1554.0,644.9 L1555.0,644.7 L1556.0,644.1 L1557.0,644.1 L1557.5,643.9" fill="none" stroke="#52c6ec" stroke-width="1.5"/><path d="M1338.0,725.1 L1339.0,725.4 L1340.0,725.5 L1341.0,725.3 L1342.0,724.9 L1343.0,724.4 L1344.0,724.4 L1345.0,724.2 L1346.0,725.0 L1347.0,725.3 L1348.0,725.0 L1349.0,724.4 L1350.0,723.9 L1351.0,723.5 L1352.0,722.8 L1353.0,722.4 L1354.0,722.6 L1355.0,723.0 L1356.0,722.6 L1357.0,722.2 L1358.0,721.8 L1359.0,721.4 L1360.0,720.5 L1361.0,719.7 L1362.0,719.3 L1363.0,718.5 L1364.0,718.3 L1365.0,718.2 L1366.0,718.6 L1367.0,718.6 L1368.0,717.5 L1369.0,716.8 L1370.0,716.2 L1371.0,716.4 L1372.0,716.0 L1373.0,716.0 L1374.0,716.0 L1375.0,715.4 L1376.0,715.0 L1377.0,714.5 L1378.0,714.4 L1379.0,713.8 L1380.0,713.8 L1381.0,713.2 L1382.0,713.1 L1383.0,712.0 L1384.0,712.8 L1385.0,713.2 L1386.0,713.6 L1387.0,712.6 L1388.0,712.0 L1389.0,711.9 L1390.0,712.6 L1391.0,712.4 L1392.0,712.4 L1393.0,712.4 L1394.0,712.3 L1395.0,711.9 L1396.0,711.9 L1397.0,711.4 L1398.0,711.7 L1399.0,710.8 L1400.0,711.4 L1401.0,710.3 L1402.0,710.7 L1403.0,709.8 L1404.0,709.3 L1405.0,708.0 L1406.0,707.7 L1407.0,707.2 L1408.0,707.0 L1409.0,706.6 L1410.0,707.1 L1411.0,706.6 L1412.0,706.0 L1413.0,705.0 L1414.0,705.1 L1415.0,705.6 L1416.0,705.6 L1417.0,704.5 L1418.0,704.0 L1419.0,703.4 L1420.0,703.0 L1421.0,701.7 L1422.0,701.8 L1423.0,702.2 L1424.0,702.4 L1425.0,701.6 L1426.0,700.9 L1427.0,700.0 L1428.0,700.2 L1429.0,699.5 L1430.0,699.7 L1431.0,699.1 L1432.0,699.3 L1433.0,698.5 L1434.0,697.3 L1435.0,696.4 L1436.0,695.4 L1437.0,695.6 L1438.0,694.8 L1439.0,695.2 L1440.0,693.9 L1441.0,693.4 L1442.0,692.1 L1443.0,691.7 L1444.0,690.9 L1445.0,690.1 L1446.0,689.9 L1447.0,689.5 L1448.0,689.2 L1449.0,687.9 L1450.0,687.2 L1451.0,686.4 L1452.0,685.9 L1453.0,685.2 L1454.0,684.2 L1455.0,683.6 L1456.0,682.9 L1457.0,681.5 L1458.0,680.4 L1459.0,679.5 L1460.0,679.5 L1461.0,677.7 L1462.0,676.6 L1463.0,675.5 L1464.0,674.4 L1465.0,672.3 L1466.0,671.8 L1467.0,671.6 L1468.0,670.9 L1469.0,668.8 L1470.0,667.2 L1471.0,666.2 L1472.0,666.0 L1473.0,665.4 L1474.0,664.5 L1475.0,663.8 L1476.0,663.6 L1477.0,662.8 L1478.0,662.0 L1479.0,660.9 L1480.0,660.9 L1481.0,659.8 L1482.0,659.4 L1483.0,658.6 L1484.0,658.0 L1485.0,656.3 L1486.0,655.8 L1487.0,655.3 L1488.0,655.8 L1489.0,655.4 L1490.0,655.7 L1491.0,655.3 L1492.0,646.6 L1493.0,637.4 L1494.0,633.3 L1495.0,633.2 L1496.0,632.6 L1497.0,632.7 L1498.0,631.9 L1499.0,632.1 L1500.0,631.7 L1501.0,631.0 L1502.0,630.3 L1503.0,628.5 L1504.0,627.6 L1505.0,625.9 L1506.0,625.4 L1507.0,624.0 L1508.0,623.3 L1509.0,623.2 L1510.0,623.4 L1511.0,624.0 L1512.0,624.2 L1513.0,624.9 L1514.0,625.0 L1515.0,625.5 L1516.0,625.9 L1517.0,626.5 L1518.0,628.2 L1519.0,628.3 L1520.0,629.2 L1521.0,629.0 L1522.0,628.5 L1523.0,627.6 L1524.0,626.3 L1525.0,625.8 L1526.0,624.7 L1527.0,624.3 L1528.0,623.8 L1529.0,622.7 L1530.0,622.1 L1531.0,620.9 L1532.0,620.7 L1533.0,619.6 L1534.0,618.7 L1535.0,617.5 L1536.0,617.2 L1537.0,617.4 L1538.0,616.9 L1539.0,616.9 L1540.0,616.0 L1541.0,615.9 L1542.0,614.9 L1543.0,614.7 L1544.0,614.9 L1545.0,615.1 L1546.0,615.1 L1547.0,614.0 L1548.0,613.2 L1549.0,612.2 L1550.0,612.2 L1551.0,612.3 L1552.0,612.4 L1553.0,611.1 L1554.0,610.6 L1555.0,610.2 L1556.0,606.4 L1557.0,603.2 L1557.5,604.9" fill="none" stroke="#2550e8" stroke-width="2"/><path d="M1338.0,708.0 L1339.0,707.8 L1340.0,708.3 L1341.0,708.8 L1342.0,709.2 L1343.0,708.9 L1344.0,709.1 L1345.0,708.9 L1346.0,708.6 L1347.0,708.1 L1348.0,709.4 L1349.0,711.0 L1350.0,711.9 L1351.0,710.4 L1352.0,709.4 L1353.0,708.2 L1354.0,707.7 L1355.0,706.1 L1356.0,704.8 L1357.0,703.8 L1358.0,704.3 L1359.0,704.8 L1360.0,705.3 L1361.0,704.6 L1362.0,704.3 L1363.0,704.2 L1364.0,704.1 L1365.0,703.3 L1366.0,702.6 L1367.0,702.2 L1368.0,702.0 L1369.0,701.9 L1370.0,701.9 L1371.0,702.3 L1372.0,701.7 L1373.0,701.4 L1374.0,700.2 L1375.0,700.0 L1376.0,700.1 L1377.0,700.4 L1378.0,701.0 L1379.0,700.4 L1380.0,699.6 L1381.0,698.8 L1382.0,698.7 L1383.0,699.4 L1384.0,699.8 L1385.0,699.5 L1386.0,698.7 L1387.0,697.5 L1388.0,697.5 L1389.0,697.0 L1390.0,696.8 L1391.0,695.9 L1392.0,695.5 L1393.0,695.8 L1394.0,695.7 L1395.0,696.5 L1396.0,695.6 L1397.0,696.2 L1398.0,695.0 L1399.0,694.7 L1400.0,694.3 L1401.0,693.8 L1402.0,694.0 L1403.0,692.8 L1404.0,692.0 L1405.0,691.4 L1406.0,691.4 L1407.0,691.7 L1408.0,691.0 L1409.0,689.7 L1410.0,688.9 L1411.0,688.2 L1412.0,688.0 L1413.0,687.8 L1414.0,686.7 L1415.0,686.6 L1416.0,685.8 L1417.0,684.9 L1418.0,683.3 L1419.0,682.6 L1420.0,682.9 L1421.0,682.4 L1422.0,681.4 L1423.0,680.7 L1424.0,680.2 L1425.0,680.2 L1426.0,679.4 L1427.0,678.7 L1428.0,677.6 L1429.0,677.1 L1430.0,676.9 L1431.0,676.6 L1432.0,675.6 L1433.0,675.3 L1434.0,674.2 L1435.0,674.1 L1436.0,673.2 L1437.0,672.5 L1438.0,671.6 L1439.0,671.0 L1440.0,670.9 L1441.0,670.6 L1442.0,669.7 L1443.0,668.3 L1444.0,666.8 L1445.0,666.5 L1446.0,666.3 L1447.0,666.4 L1448.0,665.0 L1449.0,664.1 L1450.0,663.5 L1451.0,663.2 L1452.0,662.4 L1453.0,660.9 L1454.0,659.7 L1455.0,659.2 L1456.0,658.4 L1457.0,657.9 L1458.0,656.8 L1459.0,656.6 L1460.0,655.9 L1461.0,654.7 L1462.0,653.0 L1463.0,651.6 L1464.0,651.0 L1465.0,650.7 L1466.0,650.4 L1467.0,650.0 L1468.0,648.5 L1469.0,647.6 L1470.0,646.7 L1471.0,646.6 L1472.0,645.5 L1473.0,644.0 L1474.0,643.1 L1475.0,642.4 L1476.0,642.0 L1477.0,641.1 L1478.0,639.7 L1479.0,638.2 L1480.0,636.9 L1481.0,636.5 L1482.0,635.8 L1483.0,635.2 L1484.0,634.5 L1485.0,633.7 L1486.0,632.8 L1487.0,631.7 L1488.0,631.1 L1489.0,629.8 L1490.0,628.6 L1491.0,627.8 L1492.0,627.3 L1493.0,626.3 L1494.0,609.5 L1495.0,604.1 L1496.0,601.8 L1497.0,599.8 L1498.0,598.1 L1499.0,596.8 L1500.0,596.1 L1501.0,594.2 L1502.0,591.8 L1503.0,589.6 L1504.0,587.4 L1505.0,585.2 L1506.0,583.3 L1507.0,583.5 L1508.0,583.4 L1509.0,583.5 L1510.0,582.8 L1511.0,583.7 L1512.0,583.9 L1513.0,584.2 L1514.0,585.4 L1515.0,586.4 L1516.0,587.1 L1517.0,587.4 L1518.0,588.5 L1519.0,589.3 L1520.0,589.9 L1521.0,589.9 L1522.0,589.1 L1523.0,587.3 L1524.0,585.7 L1525.0,585.0 L1526.0,584.7 L1527.0,583.9 L1528.0,582.2 L1529.0,580.4 L1530.0,579.5 L1531.0,578.1 L1532.0,577.6 L1533.0,576.4 L1534.0,575.6 L1535.0,574.3 L1536.0,572.6 L1537.0,571.1 L1538.0,569.6 L1539.0,568.8 L1540.0,568.2 L1541.0,567.4 L1542.0,567.1 L1543.0,567.3 L1544.0,567.1 L1545.0,566.8 L1546.0,566.4 L1547.0,565.5 L1548.0,564.6 L1549.0,563.6 L1550.0,563.2 L1551.0,563.1 L1552.0,560.5 L1553.0,558.2 L1554.0,555.0 L1555.0,546.7 L1556.0,537.8 L1557.0,538.7 L1557.5,540.0" fill="none" stroke="#cf9d2e" stroke-width="2"/><path d="M1338.0,656.2 L1339.0,657.0 L1340.0,657.8 L1341.0,657.8 L1342.0,656.1 L1343.0,654.8 L1344.0,654.9 L1345.0,656.2 L1346.0,657.2 L1347.0,658.0 L1348.0,656.0 L1349.0,655.3 L1350.0,654.6 L1351.0,655.1 L1352.0,654.9 L1353.0,653.3 L1354.0,653.5 L1355.0,654.1 L1356.0,656.6 L1357.0,658.5 L1358.0,658.7 L1359.0,659.1 L1360.0,658.7 L1361.0,657.8 L1362.0,656.8 L1363.0,655.4 L1364.0,654.9 L1365.0,654.6 L1366.0,653.9 L1367.0,653.5 L1368.0,652.4 L1369.0,652.8 L1370.0,652.0 L1371.0,652.5 L1372.0,651.3 L1373.0,650.9 L1374.0,650.8 L1375.0,650.4 L1376.0,651.5 L1377.0,651.0 L1378.0,651.7 L1379.0,649.6 L1380.0,647.6 L1381.0,645.0 L1382.0,645.5 L1383.0,646.8 L1384.0,648.4 L1385.0,648.2 L1386.0,648.0 L1387.0,648.0 L1388.0,645.4 L1389.0,643.3 L1390.0,639.5 L1391.0,636.5 L1392.0,632.9 L1393.0,631.3 L1394.0,629.2 L1395.0,627.6 L1396.0,628.1 L1397.0,627.9 L1398.0,628.6 L1399.0,627.7 L1400.0,627.9 L1401.0,628.9 L1402.0,625.6 L1403.0,621.9 L1404.0,617.8 L1405.0,615.3 L1406.0,615.0 L1407.0,612.8 L1408.0,612.3 L1409.0,609.2 L1410.0,609.0 L1411.0,606.8 L1412.0,605.5 L1413.0,602.7 L1414.0,599.7 L1415.0,597.5 L1416.0,594.6 L1417.0,592.4 L1418.0,592.6 L1419.0,593.2 L1420.0,593.4 L1421.0,591.2 L1422.0,589.2 L1423.0,588.4 L1424.0,587.7 L1425.0,587.8 L1426.0,586.1 L1427.0,587.1 L1428.0,585.2 L1429.0,585.5 L1430.0,583.8 L1431.0,583.4 L1432.0,581.4 L1433.0,581.6 L1434.0,581.6 L1435.0,581.3 L1436.0,580.0 L1437.0,579.9 L1438.0,578.9 L1439.0,578.1 L1440.0,575.8 L1441.0,574.7 L1442.0,574.1 L1443.0,574.0 L1444.0,573.1 L1445.0,570.9 L1446.0,568.8 L1447.0,568.5 L1448.0,568.2 L1449.0,567.5 L1450.0,565.8 L1451.0,565.0 L1452.0,564.7 L1453.0,566.2 L1454.0,568.6 L1455.0,570.2 L1456.0,571.0 L1457.0,570.7 L1458.0,570.4 L1459.0,570.9 L1460.0,569.1 L1461.0,569.2 L1462.0,567.9 L1463.0,567.0 L1464.0,564.2 L1465.0,561.6 L1466.0,557.3 L1467.0,554.5 L1468.0,551.6 L1469.0,550.4 L1470.0,547.4 L1471.0,545.0 L1472.0,543.0 L1473.0,541.3 L1474.0,540.6 L1475.0,539.1 L1476.0,538.7 L1477.0,537.8 L1478.0,537.3 L1479.0,536.3 L1480.0,536.5 L1481.0,535.1 L1482.0,534.8 L1483.0,534.2 L1484.0,533.5 L1485.0,531.6 L1486.0,531.4 L1487.0,530.6 L1488.0,531.3 L1489.0,530.2 L1490.0,531.0 L1491.0,524.5 L1492.0,514.0 L1493.0,504.5 L1494.0,496.4 L1495.0,494.7 L1496.0,492.1 L1497.0,491.1 L1498.0,488.7 L1499.0,487.1 L1500.0,483.8 L1501.0,482.0 L1502.0,481.2 L1503.0,479.2 L1504.0,477.1 L1505.0,475.1 L1506.0,473.5 L1507.0,471.6 L1508.0,469.6 L1509.0,469.9 L1510.0,471.5 L1511.0,472.3 L1512.0,472.2 L1513.0,473.5 L1514.0,474.3 L1515.0,475.0 L1516.0,474.6 L1517.0,475.0 L1518.0,476.7 L1519.0,477.8 L1520.0,478.0 L1521.0,477.8 L1522.0,476.6 L1523.0,476.4 L1524.0,476.2 L1525.0,475.1 L1526.0,474.0 L1527.0,472.7 L1528.0,471.6 L1529.0,471.0 L1530.0,470.2 L1531.0,469.5 L1532.0,467.7 L1533.0,466.4 L1534.0,465.3 L1535.0,463.8 L1536.0,462.5 L1537.0,461.5 L1538.0,460.6 L1539.0,458.7 L1540.0,457.2 L1541.0,456.6 L1542.0,457.1 L1543.0,457.1 L1544.0,457.1 L1545.0,455.9 L1546.0,455.0 L1547.0,452.5 L1548.0,451.0 L1549.0,450.2 L1550.0,451.2 L1551.0,450.1 L1552.0,437.8 L1553.0,430.6 L1554.0,427.3 L1555.0,424.0 L1556.0,406.3 L1557.0,412.3 L1557.5,420.0" fill="none" stroke="#0b3a75" stroke-width="3.3"/><line x1="1338" y1="734" x2="1557.5" y2="734" stroke="#3b68c0" stroke-width="1.8"/><ellipse cx="1368" cy="717" rx="14" ry="30" fill="#a9afbd" opacity="0.55"/><circle cx="1368" cy="654" r="13" fill="#9aa6b8" opacity="0.6"/><circle cx="1368" cy="654" r="8.5" fill="#0b3a75" stroke="#fff" stroke-width="2"/><path d="M1368,690.5 L1376.5,699 L1368,707.5 L1359.5,699 Z" fill="#d9a22a" stroke="#fff" stroke-width="1.5"/><rect x="1359" y="706" width="18" height="7" fill="#3f63e6" stroke="#fff" stroke-width="1.2"/><path d="M1368,706 L1372,713 L1364,713 Z" fill="#cfe6f5"/><rect x="1360" y="713" width="16" height="5" fill="#c25bc8" stroke="#fff" stroke-width="1"/><path d="M1368,716 L1375,726 L1361,726 Z" fill="#ef7a4a" stroke="#fff" stroke-width="1.2"/><rect x="1361" y="724" width="14" height="8" fill="#e6c22a" stroke="#fff" stroke-width="1"/><path d="M1368,725 L1376,741 L1360,741 Z" fill="#4a7fbf" stroke="#fff" stroke-width="1.8"/></svg>
<div class="bx" style="left:822px;top:357.9px;width:523.60px;height:372.10px;background:#fff;border:1.4px solid #dce2ea;border-radius:5px"></div><div class="bx" style="left:843.8px;top:427.6px;width:478.20px;height:1.40px;background:#dfe4eb"></div><div class="bx" style="left:844.25px;top:447.05px;width:16.5px;height:16.5px;border-radius:50%;background:#0b3d7a"></div><div class="bx" style="left:844.25px;top:476.57px;width:16.5px;height:16.5px;border-radius:50%;background:#d4a02a"></div><div class="bx" style="left:844.25px;top:506.10px;width:16.5px;height:16.5px;border-radius:50%;background:#2c62f5"></div><div class="bx" style="left:844.25px;top:535.62px;width:16.5px;height:16.5px;border-radius:50%;background:#4fc8ea"></div><div class="bx" style="left:844.25px;top:565.15px;width:16.5px;height:16.5px;border-radius:50%;background:#8a2fe0"></div><div class="bx" style="left:844.25px;top:594.67px;width:16.5px;height:16.5px;border-radius:50%;background:#adc0df"></div><div class="bx" style="left:844.25px;top:624.20px;width:16.5px;height:16.5px;border-radius:50%;background:#fc4a0e"></div><div class="bx" style="left:844.25px;top:653.73px;width:16.5px;height:16.5px;border-radius:50%;background:#fcd20a"></div><div class="bx" style="left:844.25px;top:683.25px;width:16.5px;height:16.5px;border-radius:50%;background:#4a7db5"></div>
<div class="tx" style="left:7.00px;top:5.85px;font-family:'Liberation Sans',sans-serif;font-size:22.3px;font-weight:normal;letter-spacing:0.114px;-webkit-text-stroke:0.2px #3a475e;color:#3a475e">Distributed Asset Value</div>
<div class="tx" style="left:334.80px;top:5.85px;font-family:'Liberation Sans',sans-serif;font-size:22.3px;font-weight:normal;letter-spacing:0.100px;-webkit-text-stroke:0.2px #3a475e;color:#3a475e">Represented Asset Value</div>
<div class="tx" style="left:664.80px;top:5.85px;font-family:'Liberation Sans',sans-serif;font-size:22.3px;font-weight:normal;letter-spacing:0.022px;-webkit-text-stroke:0.2px #3a475e;color:#3a475e">Total Asset Holders</div>
<div class="tx" style="left:994.00px;top:5.85px;font-family:'Liberation Sans',sans-serif;font-size:22.3px;font-weight:normal;letter-spacing:0.000px;-webkit-text-stroke:0.2px #3a475e;color:#3a475e">Total Stablecoin Value</div>
<div class="tx" style="left:1322.00px;top:5.85px;font-family:'Liberation Sans',sans-serif;font-size:22.3px;font-weight:normal;letter-spacing:0.052px;-webkit-text-stroke:0.2px #3a475e;color:#3a475e">Total Stablecoin Holders</div>
<div class="tx" style="left:8.60px;top:42.80px;font-family:'Liberation Sans',sans-serif;font-size:43.7px;font-weight:normal;letter-spacing:0.000px;-webkit-text-stroke:0.3px #0b0b0f;color:#0b0b0f;transform:scaleX(0.8969);transform-origin:0 0">$24.17B</div>
<div class="tx" style="left:335.78px;top:42.80px;font-family:'Liberation Sans',sans-serif;font-size:43.7px;font-weight:normal;letter-spacing:0.000px;-webkit-text-stroke:0.3px #0b0b0f;color:#0b0b0f;transform:scaleX(1.0174);transform-origin:0 0">$378.96B</div>
<div class="tx" style="left:662.71px;top:42.80px;font-family:'Liberation Sans',sans-serif;font-size:43.7px;font-weight:normal;letter-spacing:0.000px;-webkit-text-stroke:0.3px #0b0b0f;color:#0b0b0f;transform:scaleX(1.0468);transform-origin:0 0">829,390</div>
<div class="tx" style="left:992.98px;top:42.80px;font-family:'Liberation Sans',sans-serif;font-size:43.7px;font-weight:normal;letter-spacing:0.000px;-webkit-text-stroke:0.3px #0b0b0f;color:#0b0b0f;transform:scaleX(1.0152);transform-origin:0 0">$293.45B</div>
<div class="tx" style="left:1319.96px;top:42.80px;font-family:'Liberation Sans',sans-serif;font-size:43.7px;font-weight:normal;letter-spacing:0.000px;-webkit-text-stroke:0.3px #0b0b0f;color:#0b0b0f;transform:scaleX(1.0182);transform-origin:0 0">224.20M</div>
<div class="tx" style="left:27.90px;top:102.75px;font-family:'Liberation Sans',sans-serif;font-size:18.9px;font-weight:normal;letter-spacing:0.517px;-webkit-text-stroke:0.55px #1eb757;color:#1eb757">+14.25%</div>
<div class="tx" style="left:355.80px;top:102.75px;font-family:'Liberation Sans',sans-serif;font-size:18.9px;font-weight:normal;letter-spacing:0.233px;-webkit-text-stroke:0.55px #1eb757;color:#1eb757">+41.70%</div>
<div class="tx" style="left:683.80px;top:102.75px;font-family:'Liberation Sans',sans-serif;font-size:18.9px;font-weight:normal;letter-spacing:1.167px;-webkit-text-stroke:0.55px #1eb757;color:#1eb757">+36.63%</div>
<div class="tx" style="left:1013.00px;top:102.75px;font-family:'Liberation Sans',sans-serif;font-size:18.9px;font-weight:normal;letter-spacing:0.300px;-webkit-text-stroke:0.55px #e8283a;color:#e8283a">1.26%</div>
<div class="tx" style="left:1341.00px;top:102.75px;font-family:'Liberation Sans',sans-serif;font-size:18.9px;font-weight:normal;letter-spacing:1.240px;-webkit-text-stroke:0.55px #1eb757;color:#1eb757">+3.86%</div>
<div class="tx" style="left:112.00px;top:102.75px;font-family:'Liberation Sans',sans-serif;font-size:18.9px;font-weight:normal;letter-spacing:0.466px;-webkit-text-stroke:0.2px #94a0b4;color:#94a0b4;transform:scaleX(1.0484);transform-origin:0 0">from 30d ago</div>
<div class="tx" style="left:438.80px;top:102.75px;font-family:'Liberation Sans',sans-serif;font-size:18.9px;font-weight:normal;letter-spacing:0.443px;-webkit-text-stroke:0.2px #94a0b4;color:#94a0b4;transform:scaleX(1.0459);transform-origin:0 0">from 30d ago</div>
<div class="tx" style="left:772.00px;top:102.75px;font-family:'Liberation Sans',sans-serif;font-size:18.9px;font-weight:normal;letter-spacing:0.476px;-webkit-text-stroke:0.2px #94a0b4;color:#94a0b4;transform:scaleX(1.0495);transform-origin:0 0">from 30d ago</div>
<div class="tx" style="left:1074.80px;top:102.75px;font-family:'Liberation Sans',sans-serif;font-size:18.9px;font-weight:normal;letter-spacing:0.443px;-webkit-text-stroke:0.2px #94a0b4;color:#94a0b4;transform:scaleX(1.0459);transform-origin:0 0">from 30d ago</div>
<div class="tx" style="left:1418.00px;top:102.75px;font-family:'Liberation Sans',sans-serif;font-size:18.9px;font-weight:normal;letter-spacing:0.476px;-webkit-text-stroke:0.2px #94a0b4;color:#94a0b4;transform:scaleX(1.0495);transform-origin:0 0">from 30d ago</div>
<div class="tx" style="left:38.25px;top:200.60px;font-family:'Liberation Sans',sans-serif;font-size:28.1px;font-weight:normal;letter-spacing:-0.125px;-webkit-text-stroke:0.4px #0b0b0f;color:#0b0b0f">Total RWA Value</div>
<div class="tx" style="left:1410.80px;top:205.25px;font-family:'Liberation Sans',sans-serif;font-size:16.1px;font-weight:normal;letter-spacing:0.779px;-webkit-text-stroke:0.2px #111318;color:#111318">Download</div>
<div class="tx" style="left:38.10px;top:269.30px;font-family:'Liberation Sans',sans-serif;font-size:18.2px;font-weight:normal;letter-spacing:1.100px;-webkit-text-stroke:0.75px #0b0b0f;color:#0b0b0f">Asset Type</div>
<div class="tx" style="left:535.50px;top:269.30px;font-family:'Liberation Sans',sans-serif;font-size:18.2px;font-weight:normal;letter-spacing:1.680px;-webkit-text-stroke:0.75px #0b0b0f;color:#0b0b0f">Metric</div>
<div class="tx" style="left:168.25px;top:269.90px;font-family:'Liberation Sans',sans-serif;font-size:16.2px;font-weight:normal;letter-spacing:0.885px;-webkit-text-stroke:0.2px #16181d;color:#16181d">Distributed</div>
<div class="tx" style="left:290.10px;top:270.00px;font-family:'Liberation Sans',sans-serif;font-size:16.2px;font-weight:normal;letter-spacing:0.740px;-webkit-text-stroke:0.2px #6b7380;color:#6b7380">Represented</div>
<div class="tx" style="left:427.80px;top:270.00px;font-family:'Liberation Sans',sans-serif;font-size:16.2px;font-weight:normal;letter-spacing:0.725px;-webkit-text-stroke:0.2px #6b7380;color:#6b7380">All</div>
<div class="tx" style="left:646.40px;top:258.60px;font-family:'Liberation Sans',sans-serif;font-size:16.2px;font-weight:normal;letter-spacing:0.700px;-webkit-text-stroke:0.2px #16181d;color:#16181d">Total</div>
<div class="tx" style="left:644.20px;top:281.50px;font-family:'Liberation Sans',sans-serif;font-size:16.2px;font-weight:normal;letter-spacing:0.225px;-webkit-text-stroke:0.2px #16181d;color:#16181d">Value</div>
<div class="tx" style="left:768.60px;top:258.90px;font-family:'Liberation Sans',sans-serif;font-size:16.2px;font-weight:normal;letter-spacing:0.700px;-webkit-text-stroke:0.2px #6b7380;color:#6b7380">Asset</div>
<div class="tx" style="left:759.60px;top:281.65px;font-family:'Liberation Sans',sans-serif;font-size:16.2px;font-weight:normal;letter-spacing:0.800px;-webkit-text-stroke:0.2px #6b7380;color:#6b7380">Holders</div>
<div class="tx" style="left:915.10px;top:258.90px;font-family:'Liberation Sans',sans-serif;font-size:16.2px;font-weight:normal;letter-spacing:1.030px;-webkit-text-stroke:0.2px #6b7380;color:#6b7380">Active</div>
<div class="tx" style="left:898.90px;top:281.65px;font-family:'Liberation Sans',sans-serif;font-size:16.2px;font-weight:normal;letter-spacing:0.663px;-webkit-text-stroke:0.2px #6b7380;color:#6b7380">Addresses</div>
<div class="tx" style="left:1065.60px;top:258.90px;font-family:'Liberation Sans',sans-serif;font-size:16.2px;font-weight:normal;letter-spacing:0.114px;-webkit-text-stroke:0.2px #6b7380;color:#6b7380">Transfer</div>
<div class="tx" style="left:1067.90px;top:281.65px;font-family:'Liberation Sans',sans-serif;font-size:16.2px;font-weight:normal;letter-spacing:0.740px;-webkit-text-stroke:0.2px #6b7380;color:#6b7380">Volume</div>
<div class="tx" style="left:1275.60px;top:260.00px;font-family:'Liberation Sans',sans-serif;font-size:16.8px;font-weight:normal;letter-spacing:0.286px;-webkit-text-stroke:0.2px #1c2230;color:#1c2230">Include Stablecoins</div>
<div class="tx" style="left:1241.90px;top:281.70px;font-family:'Liberation Sans',sans-serif;font-size:16.3px;font-weight:normal;letter-spacing:0.447px;-webkit-text-stroke:0.2px #33425e;color:#33425e">Include stablecoins, cash and cash-equivaler</div>
<div class="tx" style="left:48.85px;top:329.80px;font-family:'Liberation Sans',sans-serif;font-size:19.6px;font-weight:normal;letter-spacing:0.990px;-webkit-text-stroke:0.2px #8897ae;color:#8897ae">$30.0B</div>
<div class="tx" style="left:48.80px;top:395.80px;font-family:'Liberation Sans',sans-serif;font-size:19.6px;font-weight:normal;letter-spacing:0.990px;-webkit-text-stroke:0.2px #8897ae;color:#8897ae">$25.0B</div>
<div class="tx" style="left:48.80px;top:461.80px;font-family:'Liberation Sans',sans-serif;font-size:19.6px;font-weight:normal;letter-spacing:0.990px;-webkit-text-stroke:0.2px #8897ae;color:#8897ae">$20.0B</div>
<div class="tx" style="left:48.80px;top:527.80px;font-family:'Liberation Sans',sans-serif;font-size:19.6px;font-weight:normal;letter-spacing:0.990px;-webkit-text-stroke:0.2px #8897ae;color:#8897ae">$15.0B</div>
<div class="tx" style="left:48.80px;top:593.80px;font-family:'Liberation Sans',sans-serif;font-size:19.6px;font-weight:normal;letter-spacing:0.990px;-webkit-text-stroke:0.2px #8897ae;color:#8897ae">$10.0B</div>
<div class="tx" style="left:60.80px;top:659.80px;font-family:'Liberation Sans',sans-serif;font-size:19.6px;font-weight:normal;letter-spacing:0.990px;-webkit-text-stroke:0.2px #8897ae;color:#8897ae">$5.0B</div>
<div class="tx" style="left:62.80px;top:725.80px;font-family:'Liberation Sans',sans-serif;font-size:19.6px;font-weight:normal;letter-spacing:0.990px;-webkit-text-stroke:0.2px #8897ae;color:#8897ae">$0.00</div>
<div class="tx" style="left:176.00px;top:759.00px;font-family:'Liberation Sans',sans-serif;font-size:19px;font-weight:normal;letter-spacing:-0.060px;-webkit-text-stroke:0.2px #8897ae;color:#8897ae">1/1/19</div>
<div class="tx" style="left:367.50px;top:759.00px;font-family:'Liberation Sans',sans-serif;font-size:19px;font-weight:normal;letter-spacing:-0.060px;-webkit-text-stroke:0.2px #8897ae;color:#8897ae">1/1/20</div>
<div class="tx" style="left:559.50px;top:759.00px;font-family:'Liberation Sans',sans-serif;font-size:19px;font-weight:normal;letter-spacing:-0.060px;-webkit-text-stroke:0.2px #8897ae;color:#8897ae">1/1/21</div>
<div class="tx" style="left:750.50px;top:759.00px;font-family:'Liberation Sans',sans-serif;font-size:19px;font-weight:normal;letter-spacing:-0.060px;-webkit-text-stroke:0.2px #8897ae;color:#8897ae">1/1/22</div>
<div class="tx" style="left:940.50px;top:759.00px;font-family:'Liberation Sans',sans-serif;font-size:19px;font-weight:normal;letter-spacing:-0.060px;-webkit-text-stroke:0.2px #8897ae;color:#8897ae">1/1/23</div>
<div class="tx" style="left:1132.50px;top:759.00px;font-family:'Liberation Sans',sans-serif;font-size:19px;font-weight:normal;letter-spacing:-0.060px;-webkit-text-stroke:0.2px #8897ae;color:#8897ae">1/1/24</div>
<div class="tx" style="left:1323.50px;top:759.00px;font-family:'Liberation Sans',sans-serif;font-size:19px;font-weight:normal;letter-spacing:-0.060px;-webkit-text-stroke:0.2px #8897ae;color:#8897ae">1/1/25</div>
<div class="tx" style="left:1514.50px;top:759.00px;font-family:'Liberation Sans',sans-serif;font-size:19px;font-weight:normal;letter-spacing:-0.060px;-webkit-text-stroke:0.2px #8897ae;color:#8897ae">1/1/26</div>
<div class="tx" style="left:185.25px;top:810.75px;font-family:'Liberation Sans',sans-serif;font-size:17.1px;font-weight:normal;letter-spacing:0.750px;-webkit-text-stroke:0.12px #1a1a1f;color:#1a1a1f">US Treasury Debt</div>
<div class="tx" style="left:410.00px;top:810.75px;font-family:'Liberation Sans',sans-serif;font-size:17.1px;font-weight:normal;letter-spacing:1.140px;-webkit-text-stroke:0.12px #1a1a1f;color:#1a1a1f">Commodities</div>
<div class="tx" style="left:635.30px;top:810.75px;font-family:'Liberation Sans',sans-serif;font-size:17.1px;font-weight:normal;letter-spacing:0.846px;-webkit-text-stroke:0.12px #1a1a1f;color:#1a1a1f">Private Credit</div>
<div class="tx" style="left:859.25px;top:810.75px;font-family:'Liberation Sans',sans-serif;font-size:17.1px;font-weight:normal;letter-spacing:1.012px;-webkit-text-stroke:0.12px #1a1a1f;color:#1a1a1f">Institutional Alter...</div>
<div class="tx" style="left:1085.50px;top:810.75px;font-family:'Liberation Sans',sans-serif;font-size:17.1px;font-weight:normal;letter-spacing:1.000px;-webkit-text-stroke:0.12px #1a1a1f;color:#1a1a1f">Corporate Bonds</div>
<div class="tx" style="left:1310.80px;top:810.75px;font-family:'Liberation Sans',sans-serif;font-size:17.1px;font-weight:normal;letter-spacing:0.825px;-webkit-text-stroke:0.12px #1a1a1f;color:#1a1a1f">non-US Governm...</div>
<div class="tx" style="left:185.25px;top:837.25px;font-family:'Liberation Sans',sans-serif;font-size:17.1px;font-weight:normal;letter-spacing:0.771px;-webkit-text-stroke:0.12px #1a1a1f;color:#1a1a1f">Public Equity</div>
<div class="tx" style="left:410.00px;top:837.25px;font-family:'Liberation Sans',sans-serif;font-size:17.1px;font-weight:normal;letter-spacing:0.746px;-webkit-text-stroke:0.12px #1a1a1f;color:#1a1a1f">Private Equity</div>
<div class="tx" style="left:636.30px;top:837.25px;font-family:'Liberation Sans',sans-serif;font-size:17.1px;font-weight:normal;letter-spacing:0.900px;-webkit-text-stroke:0.12px #1a1a1f;color:#1a1a1f">Actively-Manage...</div>
<div class="tx" style="left:860.25px;top:837.25px;font-family:'Liberation Sans',sans-serif;font-size:17.1px;font-weight:normal;letter-spacing:1.078px;-webkit-text-stroke:0.12px #1a1a1f;color:#1a1a1f">Structured Credit</div>
<div class="tx" style="left:845.20px;top:387.20px;font-family:'Liberation Sans',sans-serif;font-size:28.6px;font-weight:normal;letter-spacing:2.040px;-webkit-text-stroke:0.35px #111;color:#111">2/3/25</div>
<div class="tx" style="left:1151.90px;top:394.60px;font-family:'Liberation Mono',monospace;font-size:20.5px;font-weight:normal;letter-spacing:-0.115px;color:#111">$6,079,962,334</div>
<div class="tx" style="left:872.30px;top:446.90px;font-family:'Liberation Sans',sans-serif;font-size:19px;font-weight:normal;letter-spacing:0.553px;-webkit-text-stroke:0.12px #111;color:#111">US Treasury Debt</div>
<div class="tx" style="left:1151.90px;top:447.90px;font-family:'Liberation Mono',monospace;font-size:20.5px;font-weight:normal;letter-spacing:-0.115px;color:#111">$3,465,489,164</div>
<div class="tx" style="left:872.30px;top:476.42px;font-family:'Liberation Sans',sans-serif;font-size:19px;font-weight:normal;letter-spacing:0.895px;-webkit-text-stroke:0.12px #111;color:#111">Commodities</div>
<div class="tx" style="left:1151.40px;top:477.42px;font-family:'Liberation Mono',monospace;font-size:20.5px;font-weight:normal;letter-spacing:-0.115px;color:#111">$1,141,703,958</div>
<div class="tx" style="left:871.30px;top:505.95px;font-family:'Liberation Sans',sans-serif;font-size:19px;font-weight:normal;letter-spacing:0.669px;-webkit-text-stroke:0.12px #111;color:#111">Private Credit</div>
<div class="tx" style="left:1188.40px;top:506.95px;font-family:'Liberation Mono',monospace;font-size:20.5px;font-weight:normal;letter-spacing:-0.115px;color:#111">$16,496,800</div>
<div class="tx" style="left:871.30px;top:535.47px;font-family:'Liberation Sans',sans-serif;font-size:19px;font-weight:normal;letter-spacing:0.732px;-webkit-text-stroke:0.12px #111;color:#111">Institutional Alternative Funds</div>
<div class="tx" style="left:1176.40px;top:536.47px;font-family:'Liberation Mono',monospace;font-size:20.5px;font-weight:normal;letter-spacing:-0.115px;color:#111">$395,460,618</div>
<div class="tx" style="left:872.30px;top:565.00px;font-family:'Liberation Sans',sans-serif;font-size:19px;font-weight:normal;letter-spacing:0.757px;-webkit-text-stroke:0.12px #111;color:#111">Corporate Bonds</div>
<div class="tx" style="left:1176.40px;top:566.00px;font-family:'Liberation Mono',monospace;font-size:20.5px;font-weight:normal;letter-spacing:-0.115px;color:#111">$221,916,270</div>
<div class="tx" style="left:872.30px;top:594.52px;font-family:'Liberation Sans',sans-serif;font-size:19px;font-weight:normal;letter-spacing:0.743px;-webkit-text-stroke:0.12px #111;color:#111">non-US Government Debt</div>
<div class="tx" style="left:1176.40px;top:595.52px;font-family:'Liberation Mono',monospace;font-size:20.5px;font-weight:normal;letter-spacing:-0.115px;color:#111">$120,809,481</div>
<div class="tx" style="left:871.30px;top:624.05px;font-family:'Liberation Sans',sans-serif;font-size:19px;font-weight:normal;letter-spacing:0.642px;-webkit-text-stroke:0.12px #111;color:#111">Public Equity</div>
<div class="tx" style="left:1176.40px;top:625.05px;font-family:'Liberation Mono',monospace;font-size:20.5px;font-weight:normal;letter-spacing:-0.115px;color:#111">$554,108,597</div>
<div class="tx" style="left:871.30px;top:653.57px;font-family:'Liberation Sans',sans-serif;font-size:19px;font-weight:normal;letter-spacing:0.592px;-webkit-text-stroke:0.12px #111;color:#111">Private Equity</div>
<div class="tx" style="left:1188.40px;top:654.57px;font-family:'Liberation Mono',monospace;font-size:20.5px;font-weight:normal;letter-spacing:-0.115px;color:#111">$55,350,513</div>
<div class="tx" style="left:873.30px;top:683.10px;font-family:'Liberation Sans',sans-serif;font-size:19px;font-weight:normal;letter-spacing:0.762px;-webkit-text-stroke:0.12px #111;color:#111">Actively-Managed Strategies</div>
<div class="tx" style="left:1176.40px;top:684.10px;font-family:'Liberation Mono',monospace;font-size:20.5px;font-weight:normal;letter-spacing:-0.115px;color:#111">$108,626,933</div>
</body></html>
